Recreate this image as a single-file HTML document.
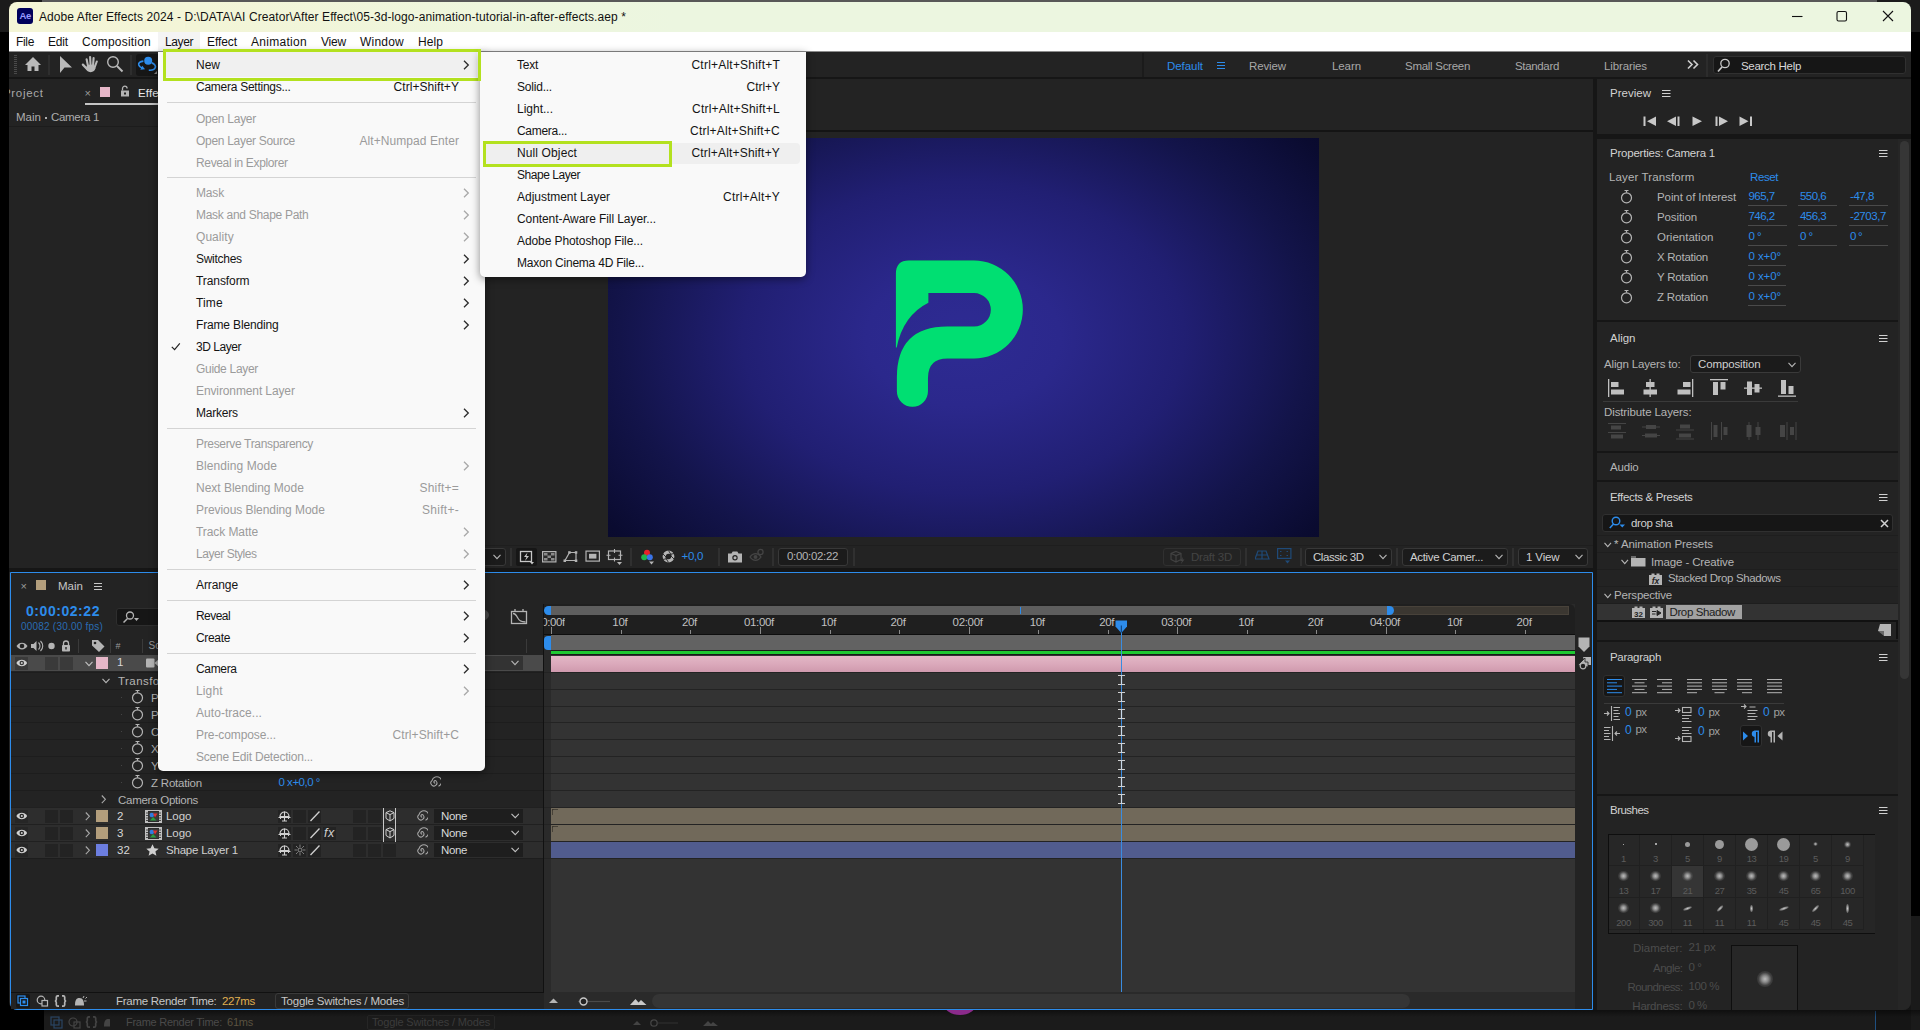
<!DOCTYPE html><html><head><meta charset="utf-8"><title>After Effects</title><style>

html,body{margin:0;padding:0;background:#000;}
body{width:1920px;height:1030px;position:relative;overflow:hidden;font-family:"Liberation Sans",sans-serif;}
body>div,body>span,body>svg{position:absolute;}
.t{white-space:pre;display:block;}
div{box-sizing:border-box;}

#t1{letter-spacing:-0.271px}
#t2{letter-spacing:-0.227px}
#t3{letter-spacing:-0.160px}
#t4{letter-spacing:-0.273px}
#t5{letter-spacing:0.082px}
#t6{letter-spacing:-0.336px}
#t7{letter-spacing:-0.172px}
#t8{letter-spacing:0.209px}
#t9{letter-spacing:-0.406px}
#t10{letter-spacing:-0.078px}
#t11{letter-spacing:0.292px}
#t12{letter-spacing:-0.199px}
#t13{letter-spacing:0.219px}
#t14{letter-spacing:0.078px}
#t15{letter-spacing:-0.062px}
#t16{letter-spacing:-0.120px}
#t17{letter-spacing:-0.084px}
#t18{letter-spacing:-0.283px}
#t19{letter-spacing:-0.336px}
#t20{letter-spacing:-0.123px}
#t21{letter-spacing:-0.300px}
#t22{letter-spacing:0.672px}
#t24{letter-spacing:0.119px}
#t25{letter-spacing:0.016px}
#t26{letter-spacing:-0.312px}
#t27{letter-spacing:-0.301px}
#t28{letter-spacing:-0.336px}
#t29{letter-spacing:-0.229px}
#t30{letter-spacing:-0.447px}
#t31{letter-spacing:-0.331px}
#t32{letter-spacing:-0.135px}
#t34{letter-spacing:0.016px}
#t35{letter-spacing:0.550px}
#t36{letter-spacing:0.212px}
#t40{letter-spacing:0.446px}
#t46{letter-spacing:-0.206px}
#t47{letter-spacing:-0.483px}
#t48{letter-spacing:-0.267px}
#t50{letter-spacing:-0.023px}
#t51{letter-spacing:-0.375px}
#t53{letter-spacing:-0.023px}
#t54{letter-spacing:0.633px}
#t55{letter-spacing:-0.375px}
#t57{letter-spacing:-0.216px}
#t58{letter-spacing:-0.375px}
#t59{letter-spacing:-0.416px}
#t60{letter-spacing:-0.333px}
#t61{letter-spacing:-0.333px}
#t62{letter-spacing:-0.331px}
#t63{letter-spacing:-0.333px}
#t64{letter-spacing:-0.333px}
#t65{letter-spacing:-0.331px}
#t66{letter-spacing:-0.333px}
#t67{letter-spacing:-0.333px}
#t68{letter-spacing:-0.331px}
#t69{letter-spacing:-0.333px}
#t70{letter-spacing:-0.333px}
#t71{letter-spacing:-0.331px}
#t72{letter-spacing:-0.333px}
#t73{letter-spacing:-0.333px}
#t74{letter-spacing:-0.275px}
#t75{letter-spacing:-0.306px}
#t76{letter-spacing:-0.183px}
#t77{letter-spacing:0.013px}
#t78{letter-spacing:-0.215px}
#t79{letter-spacing:0.118px}
#t80{letter-spacing:-0.409px}
#t81{letter-spacing:-0.091px}
#t82{letter-spacing:-0.115px}
#t83{letter-spacing:0.021px}
#t84{letter-spacing:-0.270px}
#t85{letter-spacing:-0.250px}
#t86{letter-spacing:-0.206px}
#t87{letter-spacing:-0.556px}
#t88{letter-spacing:-0.556px}
#t89{letter-spacing:-0.444px}
#t90{letter-spacing:-0.556px}
#t91{letter-spacing:-0.556px}
#t92{letter-spacing:-0.431px}
#t93{letter-spacing:-0.568px}
#t94{letter-spacing:-0.568px}
#t95{letter-spacing:-0.734px}
#t96{letter-spacing:-0.094px}
#t97{letter-spacing:-0.094px}
#t98{letter-spacing:-0.094px}
#t99{letter-spacing:-0.016px}
#t100{letter-spacing:-0.173px}
#t101{letter-spacing:-0.129px}
#t102{letter-spacing:-0.110px}
#t103{letter-spacing:-0.184px}
#t104{letter-spacing:-0.324px}
#t105{letter-spacing:-0.408px}
#t106{letter-spacing:-0.072px}
#t107{letter-spacing:-0.126px}
#t108{letter-spacing:-0.384px}
#t109{letter-spacing:-0.190px}
#t110{letter-spacing:-0.381px}
#t111{letter-spacing:-0.302px}
#t113{letter-spacing:-0.578px}
#t115{letter-spacing:-0.578px}
#t117{letter-spacing:-0.578px}
#t119{letter-spacing:-0.578px}
#t121{letter-spacing:-0.578px}
#t122{letter-spacing:-0.527px}
#t123{letter-spacing:-0.297px}
#t124{letter-spacing:-0.297px}
#t125{letter-spacing:-0.297px}
#t126{letter-spacing:-0.297px}
#t127{letter-spacing:-0.539px}
#t128{letter-spacing:-0.539px}
#t129{letter-spacing:-0.297px}
#t130{letter-spacing:-0.297px}
#t131{letter-spacing:-0.539px}
#t132{letter-spacing:-0.539px}
#t133{letter-spacing:-0.539px}
#t134{letter-spacing:-0.539px}
#t135{letter-spacing:-0.539px}
#t136{letter-spacing:-0.539px}
#t137{letter-spacing:-0.539px}
#t138{letter-spacing:-0.453px}
#t139{letter-spacing:-0.453px}
#t140{letter-spacing:-0.453px}
#t141{letter-spacing:-0.188px}
#t142{letter-spacing:-0.188px}
#t143{letter-spacing:-0.188px}
#t144{letter-spacing:-0.539px}
#t145{letter-spacing:-0.539px}
#t146{letter-spacing:-0.539px}
#t147{letter-spacing:-0.040px}
#t148{letter-spacing:-0.228px}
#t149{letter-spacing:-0.518px}
#t150{letter-spacing:-0.401px}
#t151{letter-spacing:-0.637px}
#t152{letter-spacing:-0.422px}
#t153{letter-spacing:-0.005px}
#t154{letter-spacing:-0.260px}
#t155{letter-spacing:0.066px}
#t156{letter-spacing:-0.272px}
#t157{letter-spacing:-0.298px}
#t158{letter-spacing:0.069px}
#t159{letter-spacing:-0.353px}
#t160{letter-spacing:-0.168px}
#t161{letter-spacing:-0.294px}
#t162{letter-spacing:0.049px}
#t163{letter-spacing:-0.279px}
#t164{letter-spacing:-0.082px}
#t165{letter-spacing:0.141px}
#t166{letter-spacing:-0.158px}
#t167{letter-spacing:-0.463px}
#t168{letter-spacing:-0.307px}
#t169{letter-spacing:-0.113px}
#t170{letter-spacing:-0.221px}
#t171{letter-spacing:-0.336px}
#t172{letter-spacing:0.072px}
#t173{letter-spacing:-0.015px}
#t174{letter-spacing:0.210px}
#t175{letter-spacing:-0.058px}
#t176{letter-spacing:0.283px}
#t177{letter-spacing:-0.082px}
#t178{letter-spacing:-0.453px}
#t179{letter-spacing:-0.100px}
#t180{letter-spacing:-0.560px}
#t181{letter-spacing:-0.339px}
#t182{letter-spacing:-0.331px}
#t183{letter-spacing:0.134px}
#t184{letter-spacing:0.048px}
#t185{letter-spacing:-0.098px}
#t186{letter-spacing:0.095px}
#t187{letter-spacing:-0.221px}
#t188{letter-spacing:-0.254px}
#t189{letter-spacing:0.217px}
#t190{letter-spacing:-0.211px}
#t191{letter-spacing:-0.031px}
#t192{letter-spacing:-0.004px}
#t193{letter-spacing:0.227px}
#t194{letter-spacing:-0.299px}
#t195{letter-spacing:0.227px}
#t196{letter-spacing:0.119px}
#t197{letter-spacing:0.174px}
#t198{letter-spacing:-0.460px}
#t199{letter-spacing:-0.024px}
#t200{letter-spacing:0.231px}
#t201{letter-spacing:-0.081px}
#t202{letter-spacing:-0.091px}
#t203{letter-spacing:-0.219px}
</style></head><body>
<div style="left:0px;top:0px;width:1920px;height:32px;background:#1b1b1b;"></div>
<div style="left:42px;top:0px;width:1835px;height:2px;background:#585858;"></div>
<div style="left:44px;top:1000px;width:1832px;height:30px;background:#1b1b1b;"></div>
<div style="left:1875px;top:1011px;width:1px;height:19px;background:#1f4f80;"></div>
<div style="left:1876px;top:1000px;width:44px;height:30px;background:#151515;"></div>
<div style="left:1911px;top:916px;width:9px;height:114px;background:#1a1a1a;"></div>
<span id="t1" class="t" style="left:126px;top:1014px;font-size:11px;line-height:16px;color:#4a4a4a;">Frame Render Time:</span>
<span id="t2" class="t" style="left:227px;top:1014px;font-size:11px;line-height:16px;color:#5a5240;">61ms</span>
<span id="t3" class="t" style="left:372px;top:1014px;font-size:11px;line-height:16px;color:#3c3c3c;">Toggle Switches / Modes</span>
<div style="left:367px;top:1015px;width:128px;height:15px;background:transparent;border:1px solid #262626;border-radius:2px;"></div>
<svg style="left:50px;top:1016px;" width="60" height="13" viewBox="0 0 60 13"><g fill="none" stroke="#2a4563" stroke-width="1.200"><rect x="1" y="1" width="8" height="8"/><rect x="4" y="4" width="8" height="8"/></g><g fill="none" stroke="#444" stroke-width="1.200"><circle cx="23" cy="6" r="4"/><rect x="24" y="6" width="6" height="6"/></g><path d="M42 0.800h-1.200q-1.500 0-1.500 1.500v2.200q0 1.500-1.500 1.500 1.500 0 1.500 1.500v2.200q0 1.500 1.500 1.500H42M45 0.800h1.200q1.500 0 1.500 1.500v2.200q0 1.500 1.500 1.500-1.500 0-1.500 1.500v2.200q0 1.500-1.500 1.500H45" fill="none" stroke="#444" stroke-width="1.700" transform="translate(-2 0)"/><path d="M55 10.500c0-5 1-7.500 4.500-7.500s4.500 3.500 4.500 7.500z" fill="#444" transform="translate(-1 0)"/></svg>
<div style="left:44px;top:1010px;width:1876px;height:7px;background:linear-gradient(180deg,rgba(0,0,0,0.450),rgba(0,0,0,0));"></div>
<svg style="left:633px;top:1017px;" width="100" height="12" viewBox="0 0 100 12"><path d="M0 8l4-4 4 4z" fill="#444"/><circle cx="21" cy="6" r="3.2" fill="none" stroke="#444" stroke-width="1.3"/><path d="M25 6h20" stroke="#333"/><path d="M70 9l5-5 3 3 2-2 5 4z" fill="#444"/></svg>
<svg style="left:930px;top:1010px;" width="60" height="6" viewBox="0 0 60 6"><ellipse cx="30" cy="-6" rx="16" ry="11" fill="#8a2a8a"/></svg>
<div style="left:9px;top:2px;width:1902px;height:1008px;background:#232323;border-radius:8px;"></div>
<div style="left:9px;top:2px;width:1902px;height:30px;background:linear-gradient(90deg,#f4f5d6 0%,#f3f5d7 10%,#eef6dd 25%,#ecf6e0 35%,#ecf6e0 100%);border-radius:8px 8px 0 0;"></div>
<div style="left:17px;top:8px;width:16px;height:16px;background:#00005b;border-radius:3px;"></div>
<span id="t4" class="t" style="left:19.5px;top:9px;font-size:9.5px;line-height:13px;color:#9999ff;font-weight:bold;letter-spacing:-0.3px;">Ae</span>
<span id="t5" class="t" style="left:39px;top:9px;font-size:12px;line-height:16px;color:#111;">Adobe After Effects 2024 - D:\DATA\AI Creator\After Effect\05-3d-logo-animation-tutorial-in-after-effects.aep *</span>
<svg style="left:1785px;top:5px;" width="120" height="24" viewBox="0 0 120 24"><g stroke="#111" stroke-width="1.1" fill="none"><path d="M7 11.5h10.5"/><rect x="52" y="6.5" width="9.5" height="9.5" rx="1.5"/><path d="M98 6l10 10M108 6l-10 10"/></g></svg>
<div style="left:9px;top:32px;width:1902px;height:20px;background:#ffffff;"></div>
<div style="left:158px;top:32px;width:42px;height:20px;background:#f4f4f4;"></div>
<span id="t6" class="t" style="left:16px;top:34px;font-size:12px;line-height:16px;color:#111;">File</span>
<span id="t7" class="t" style="left:48px;top:34px;font-size:12px;line-height:16px;color:#111;">Edit</span>
<span id="t8" class="t" style="left:82px;top:34px;font-size:12px;line-height:16px;color:#111;">Composition</span>
<span id="t9" class="t" style="left:165px;top:34px;font-size:12px;line-height:16px;color:#111;">Layer</span>
<span id="t10" class="t" style="left:207px;top:34px;font-size:12px;line-height:16px;color:#111;">Effect</span>
<span id="t11" class="t" style="left:251px;top:34px;font-size:12px;line-height:16px;color:#111;">Animation</span>
<span id="t12" class="t" style="left:321px;top:34px;font-size:12px;line-height:16px;color:#111;">View</span>
<span id="t13" class="t" style="left:360px;top:34px;font-size:12px;line-height:16px;color:#111;">Window</span>
<span id="t14" class="t" style="left:418px;top:34px;font-size:12px;line-height:16px;color:#111;">Help</span>
<div style="left:9px;top:51px;width:1902px;height:26px;background:#232323;"></div>
<div style="left:9px;top:51px;width:1902px;height:1px;background:#8c8c8c;"></div>
<div style="left:9px;top:77px;width:1902px;height:2px;background:#161616;"></div>
<svg style="left:14px;top:55px;" width="4" height="20" viewBox="0 0 4 20"><rect x="0" y="0" width="3" height="1" fill="#4a4a4a"/><rect x="0" y="2" width="3" height="1" fill="#4a4a4a"/><rect x="0" y="4" width="3" height="1" fill="#4a4a4a"/><rect x="0" y="6" width="3" height="1" fill="#4a4a4a"/><rect x="0" y="8" width="3" height="1" fill="#4a4a4a"/><rect x="0" y="10" width="3" height="1" fill="#4a4a4a"/><rect x="0" y="12" width="3" height="1" fill="#4a4a4a"/><rect x="0" y="14" width="3" height="1" fill="#4a4a4a"/><rect x="0" y="16" width="3" height="1" fill="#4a4a4a"/><rect x="0" y="18" width="3" height="1" fill="#4a4a4a"/></svg>
<svg style="left:24px;top:56px;" width="18" height="16" viewBox="0 0 18 16"><path d="M9 1L1 9h2.5v6h4v-4.5h3V15h4V9H17z" fill="#b9b9b9"/></svg>
<div style="left:48px;top:55px;width:2px;height:20px;background:#2e2e2e;"></div>
<svg style="left:59px;top:55px;" width="14" height="19" viewBox="0 0 14 19"><path d="M1 1v17l4.5-5.5H13z" fill="#b9b9b9"/></svg>
<svg style="left:81px;top:55px;" width="18" height="18" viewBox="0 0 18 18"><g stroke="#b9b9b9" stroke-width="2.100" stroke-linecap="round" fill="none"><path d="M7.300 12.400L5.600 4.200M9.700 12.400L9.100 2M11.900 12.400L12.600 3.100M13.400 13L15.800 6.500"/><path d="M5.800 13.800L1.900 9.600" stroke-width="2.300"/></g><ellipse cx="9.600" cy="13.300" rx="4.700" ry="3.900" fill="#b9b9b9"/></svg>
<svg style="left:106px;top:55px;" width="18" height="18" viewBox="0 0 18 18"><circle cx="7" cy="7" r="5.3" fill="none" stroke="#b9b9b9" stroke-width="1.4"/><path d="M11 11l5.500 5.500" stroke="#b9b9b9" stroke-width="2"/></svg>
<div style="left:130px;top:55px;width:2px;height:20px;background:#2e2e2e;"></div>
<div style="left:136px;top:54px;width:26px;height:22px;background:#161616;border-radius:3px;"></div>
<svg style="left:137px;top:55px;" width="24" height="20" viewBox="0 0 24 20"><circle cx="11.200" cy="5.800" r="4" fill="#2d8ceb"/><path d="M6.400 6.100C3 6.500 1.200 8 1.800 10C2.300 11.500 3.500 12.500 5 13" fill="none" stroke="#2d8ceb" stroke-width="1.700"/><path d="M3.300 14.700l4.700-0.400-2.700-3.600z" fill="#2d8ceb"/><path d="M14.800 7.900C17.500 9 19 10.800 18.300 12.500C17.600 14.300 15 15.400 11.800 15.200" fill="none" stroke="#2d8ceb" stroke-width="1.700"/><path d="M20 19v-3l-3 3z" fill="#888"/></svg>
<div style="left:1142px;top:53px;width:2px;height:24px;background:#1b1b1b;"></div>
<span id="t15" class="t" style="left:1167px;top:58px;font-size:11.5px;line-height:16px;color:#2d8ceb;">Default</span>
<svg style="left:1217px;top:61px;" width="9" height="9" viewBox="0 0 9 9"><path d="M0 1.500h8M0 4.500h8M0 7.500h8" stroke="#2d8ceb" stroke-width="1.200"/></svg>
<span id="t16" class="t" style="left:1249px;top:58px;font-size:11.5px;line-height:16px;color:#a8a8a8;">Review</span>
<span id="t17" class="t" style="left:1332px;top:58px;font-size:11.5px;line-height:16px;color:#a8a8a8;">Learn</span>
<span id="t18" class="t" style="left:1405px;top:58px;font-size:11.5px;line-height:16px;color:#a8a8a8;">Small Screen</span>
<span id="t19" class="t" style="left:1515px;top:58px;font-size:11.5px;line-height:16px;color:#a8a8a8;">Standard</span>
<span id="t20" class="t" style="left:1604px;top:58px;font-size:11.5px;line-height:16px;color:#a8a8a8;">Libraries</span>
<svg style="left:1687px;top:59px;" width="12" height="11" viewBox="0 0 12 11"><path d="M1 1.500l4 4-4 4M6.500 1.500l4 4-4 4" fill="none" stroke="#d0d0d0" stroke-width="1.600"/></svg>
<div style="left:1706px;top:54px;width:2px;height:23px;background:#2c2c2c;"></div>
<div style="left:1713px;top:56px;width:193px;height:18px;background:#161616;border:1px solid #303030;border-radius:3px;"></div>
<svg style="left:1716px;top:58px;" width="16" height="15" viewBox="0 0 16 15"><circle cx="9" cy="5.500" r="4.200" fill="none" stroke="#c8c8c8" stroke-width="1.300"/><path d="M6 9L2 13.500" stroke="#c8c8c8" stroke-width="1.700"/></svg>
<span id="t21" class="t" style="left:1741px;top:58px;font-size:11.5px;line-height:16px;color:#d8d8d8;">Search Help</span>
<span id="t22" class="t" style="left:3px;top:85px;font-size:11.5px;line-height:16px;color:#a8a8a8;clip-path:inset(0 0 0 6px);">Project</span>
<span id="t23" class="t" style="left:84.5px;top:85px;font-size:11px;line-height:16px;color:#9a9a9a;">×</span>
<div style="left:100px;top:87px;width:10px;height:10px;background:#e6b7c8;"></div>
<svg style="left:120px;top:85px;" width="10" height="12" viewBox="0 0 10 12"><path d="M2.500 5.500V3.500a2.300 2.300 0 0 1 4.600 0" fill="none" stroke="#b4b4b4" stroke-width="1.300"/><rect x="1" y="5.500" width="8" height="6" fill="#b4b4b4"/><rect x="4" y="7.500" width="2" height="2" fill="#232323"/></svg>
<span id="t24" class="t" style="left:138px;top:85px;font-size:11.5px;line-height:16px;color:#e8e8e8;">Effect Controls</span>
<div style="left:85px;top:103px;width:300px;height:2px;background:#c4c4c4;"></div>
<span id="t25" class="t" style="left:16px;top:109px;font-size:11.5px;line-height:16px;color:#aeaeae;">Main</span>
<div style="left:45px;top:117px;width:2px;height:2px;background:#aeaeae;"></div>
<span id="t26" class="t" style="left:51px;top:109px;font-size:11.5px;line-height:16px;color:#aeaeae;">Camera 1</span>
<div style="left:9px;top:126px;width:428px;height:1px;background:#1c1c1c;"></div>
<div style="left:437px;top:79px;width:3px;height:493px;background:#161616;"></div>
<div style="left:440px;top:130px;width:1153px;height:2px;background:#141414;"></div>
<div style="left:1593px;top:79px;width:4px;height:931px;background:#161616;"></div>
<div style="left:608px;top:138px;width:711px;height:399px;background:radial-gradient(ellipse 62% 78% at 50% 50%,#2e2b93 0%,#2b288c 22%,#211f73 50%,#13144a 78%,#0a0b30 100%,#070824 115%);"></div>
<svg style="left:608px;top:138px;" width="711" height="399" viewBox="608 138 711 399"><defs><filter id="ds" x="-20%" y="-20%" width="140%" height="140%"><feGaussianBlur in="SourceAlpha" stdDeviation="4"/><feOffset dx="0" dy="1"/><feComponentTransfer><feFuncA type="linear" slope="0.600"/></feComponentTransfer><feMerge><feMergeNode/><feMergeNode in="SourceGraphic"/></feMerge></filter></defs><g transform="translate(860 230) scale(0.19417)" filter="url(#ds)"><path d="M185 225Q185 157 252 157L586 157A252.500 252.500 0 0 1 586 662L450 662Q350 662 350 762L350 830A80 80 0 0 1 190 830L190 760Q190 497 450 497L588 497A86 86 0 0 0 588 325L352 325L352 375Q222 440 189 605L185 605Z" fill="#05df72"/></g></svg>
<div style="left:485px;top:545px;width:1108px;height:1px;background:#1e1e1e;"></div>
<div style="left:440px;top:548px;width:66px;height:18px;background:#1b1b1b;border:1px solid #383838;border-radius:3px;"></div>
<svg style="left:493px;top:554px;" width="8" height="6" viewBox="0 0 8 6"><path d="M0.500 0.800l3.5 3.8 3.5-3.800" fill="none" stroke="#b4b4b4" stroke-width="1.150"/></svg>
<div style="left:510px;top:548px;width:2px;height:18px;background:#303030;"></div>
<div style="left:516px;top:548px;width:21px;height:18px;background:#161616;border-radius:2px;"></div>
<svg style="left:519px;top:549px;" width="16" height="16" viewBox="0 0 16 16"><rect x="1.500" y="2.500" width="11" height="10" fill="none" stroke="#c8c8c8" stroke-width="1.300"/><path d="M8.500 3.500L5 8h2.500L6 12l4-5H7.500z" fill="#c8c8c8"/><path d="M11 13h4l-2 2.500z" fill="#c8c8c8"/></svg>
<svg style="left:542px;top:551px;" width="15" height="12" viewBox="0 0 15 12"><rect x="0.600" y="0.600" width="13.300" height="10.300" fill="#2a2a2a" stroke="#b4b4b4" stroke-width="1.200"/><path d="M2 2h3.500v2.500H2zM9 2h3.500v2.500H9zM5.500 4.500H9V7H5.500zM2 7h3.500v2.500H2zM9 7h3.500v2.500H9z" fill="#8a8a8a"/></svg>
<svg style="left:563px;top:550px;" width="16" height="13" viewBox="0 0 16 13"><path d="M6.500 2.500L13 2.500 13 10.500 2 10.500z" fill="none" stroke="#b4b4b4" stroke-width="1.200"/><rect x="0.500" y="9.500" width="2.500" height="2.500" fill="#b4b4b4"/><rect x="11.800" y="1.200" width="2.500" height="2.500" fill="#b4b4b4"/><rect x="5.200" y="1.200" width="2.500" height="2.500" fill="#b4b4b4"/><rect x="11.800" y="9.500" width="2.500" height="2.500" fill="#b4b4b4"/></svg>
<svg style="left:585px;top:550px;" width="16" height="13" viewBox="0 0 16 13"><rect x="1" y="1.100" width="13.400" height="10" fill="none" stroke="#b4b4b4" stroke-width="1.200"/><rect x="4" y="3.800" width="7.400" height="4.800" fill="#b4b4b4"/></svg>
<svg style="left:606px;top:548px;" width="18" height="18" viewBox="0 0 18 18"><rect x="2.500" y="3" width="12" height="8.500" fill="none" stroke="#b4b4b4" stroke-width="1.200"/><path d="M8.500 1v4M8.500 9.500v4M0.500 7.200h4M12.500 7.200h4" stroke="#b4b4b4" stroke-width="1.100"/><path d="M11 14h5l-2.500 3z" fill="#b4b4b4"/></svg>
<div style="left:630px;top:548px;width:2px;height:18px;background:#303030;"></div>
<svg style="left:640px;top:549px;" width="16" height="17" viewBox="0 0 16 17"><circle cx="7" cy="3.800" r="3" fill="#e8202a"/><circle cx="4.200" cy="8.300" r="3" fill="#22b14c"/><circle cx="9.800" cy="8.300" r="3" fill="#3a74e8"/><path d="M9 12.500h5l-2.500 3z" fill="#b4b4b4"/></svg>
<svg style="left:662px;top:550px;" width="14" height="14" viewBox="0 0 14 14"><circle cx="6.500" cy="6.500" r="4.300" fill="none" stroke="#b4b4b4" stroke-width="3.200"/><path d="M6.500 0.500l3 5M12.500 3.500l-5.500 1M12.500 9.500l-4-4M6.500 12.500l-3-5M0.500 9.500l5.500-1M0.500 3.500l4 4" stroke="#232323" stroke-width="0.900"/></svg>
<span id="t27" class="t" style="left:681.5px;top:548px;font-size:11.5px;line-height:16px;color:#2d8ceb;">+0,0</span>
<div style="left:718px;top:548px;width:2px;height:18px;background:#303030;"></div>
<svg style="left:727px;top:550px;" width="16" height="13" viewBox="0 0 16 13"><path d="M1 3.500h3.500l1.200-2h4.600l1.200 2H15v9H1z" fill="#b4b4b4"/><circle cx="8" cy="7.800" r="2.700" fill="#232323"/><circle cx="8" cy="7.800" r="1.500" fill="#b4b4b4"/></svg>
<svg style="left:749px;top:548px;" width="16" height="15" viewBox="0 0 16 15"><path d="M1 9c3-4.500 8-4.500 11 0-3 4.500-8 4.500-11 0z" fill="none" stroke="#444" stroke-width="1.300"/><circle cx="6.500" cy="9" r="2" fill="#444"/><circle cx="11.500" cy="4" r="2.600" fill="none" stroke="#444" stroke-width="1.300"/></svg>
<div style="left:772px;top:548px;width:2px;height:18px;background:#303030;"></div>
<div style="left:778px;top:548px;width:70px;height:18px;background:#1b1b1b;border:1px solid #383838;border-radius:3px;"></div>
<span id="t28" class="t" style="left:787px;top:548px;font-size:11.5px;line-height:16px;color:#b4b4b4;">0:00:02:22</span>
<div style="left:853px;top:548px;width:2px;height:18px;background:#303030;"></div>
<div style="left:1163px;top:548px;width:78px;height:18px;background:transparent;border:1px solid #303030;border-radius:3px;"></div>
<svg style="left:1170px;top:550px;" width="18" height="15" viewBox="0 0 18 15"><path d="M6 1.500l5 2v6l-5 2.500-5-2.500v-6z M1 3.500l5 2 5-2M6 5.500v6.500" fill="none" stroke="#424242" stroke-width="1.200"/><path d="M13 7l-3 4h2l-1.500 3.500 4-5h-2z" fill="#424242"/></svg>
<span id="t29" class="t" style="left:1191px;top:549px;font-size:11.5px;line-height:16px;color:#434343;">Draft 3D</span>
<div style="left:1245px;top:548px;width:2px;height:18px;background:#303030;"></div>
<svg style="left:1255px;top:550px;" width="15" height="11" viewBox="0 0 15 11"><path d="M3 1h8l3 8H0z M7 1v8M1.500 5h11" fill="none" stroke="#1f4a78" stroke-width="1.200"/></svg>
<svg style="left:1277px;top:548px;" width="15" height="17" viewBox="0 0 15 17"><rect x="0.600" y="0.600" width="13.300" height="9.800" fill="none" stroke="#1f4a78" stroke-width="1.200"/><path d="M3 3.500h1.500M9.500 3.500H11M3 7.500h1.500M9.500 7.500H11" stroke="#1f4a78"/><path d="M8 12.500h5l-2.500 3z" fill="#1f4a78"/></svg>
<div style="left:1300px;top:548px;width:2px;height:18px;background:#303030;"></div>
<div style="left:1305px;top:548px;width:87px;height:18px;background:#1b1b1b;border:1px solid #383838;border-radius:3px;"></div>
<span id="t30" class="t" style="left:1313px;top:549px;font-size:11.5px;line-height:16px;color:#d0d0d0;">Classic 3D</span>
<svg style="left:1379px;top:554px;" width="8" height="6" viewBox="0 0 8 6"><path d="M0.500 0.800l3.5 3.8 3.5-3.800" fill="none" stroke="#b4b4b4" stroke-width="1.150"/></svg>
<div style="left:1396px;top:548px;width:2px;height:18px;background:#303030;"></div>
<div style="left:1402px;top:548px;width:106px;height:18px;background:#1b1b1b;border:1px solid #383838;border-radius:3px;"></div>
<span id="t31" class="t" style="left:1410px;top:549px;font-size:11.5px;line-height:16px;color:#d0d0d0;">Active Camer...</span>
<svg style="left:1494.5px;top:554px;" width="8" height="6" viewBox="0 0 8 6"><path d="M0.500 0.800l3.5 3.8 3.5-3.800" fill="none" stroke="#b4b4b4" stroke-width="1.150"/></svg>
<div style="left:1512px;top:548px;width:2px;height:18px;background:#303030;"></div>
<div style="left:1518px;top:548px;width:70px;height:18px;background:#1b1b1b;border:1px solid #383838;border-radius:3px;"></div>
<span id="t32" class="t" style="left:1526px;top:549px;font-size:11.5px;line-height:16px;color:#d0d0d0;">1 View</span>
<svg style="left:1575px;top:554px;" width="8" height="6" viewBox="0 0 8 6"><path d="M0.500 0.800l3.5 3.8 3.5-3.800" fill="none" stroke="#b4b4b4" stroke-width="1.150"/></svg>
<div style="left:9px;top:568px;width:1584px;height:4px;background:#161616;"></div>
<div style="left:10px;top:572px;width:1583px;height:438px;background:#232323;border:1px solid #2d8ceb;border-radius:0 0 0 7px;"></div>
<span id="t33" class="t" style="left:20.5px;top:578px;font-size:11px;line-height:16px;color:#9a9a9a;">×</span>
<div style="left:36px;top:580px;width:10px;height:10px;background:#b39e7c;"></div>
<span id="t34" class="t" style="left:58px;top:578px;font-size:11.5px;line-height:16px;color:#c6c6c6;">Main</span>
<svg style="left:94px;top:582px;" width="9" height="9" viewBox="0 0 9 9"><path d="M0 1.500h8M0 4.500h8M0 7.500h8" stroke="#c6c6c6" stroke-width="1.200"/></svg>
<span id="t35" class="t" style="left:26px;top:602px;font-size:14px;line-height:18px;color:#2d8ceb;font-weight:bold;">0:00:02:22</span>
<span id="t36" class="t" style="left:21px;top:619px;font-size:10px;line-height:15px;color:#2a6cb3;">00082 (30.00 fps)</span>
<div style="left:116px;top:608px;width:345px;height:18px;background:#161616;border:1px solid #2e2e2e;border-radius:3px;"></div>
<svg style="left:122px;top:611px;" width="20" height="12" viewBox="0 0 20 12"><circle cx="8" cy="4.500" r="3.500" fill="none" stroke="#b4b4b4" stroke-width="1.300"/><path d="M5.500 7.500L1.500 11.500" stroke="#b4b4b4" stroke-width="1.500"/><path d="M12 7h5l-2.500 3z" fill="#b4b4b4"/></svg>
<svg style="left:472px;top:608px;" width="20" height="18" viewBox="0 0 20 18"><ellipse cx="9" cy="7" rx="8" ry="6" fill="#4a4a4a"/><path d="M9 13l-1 4" stroke="#4a4a4a" stroke-width="2"/></svg>
<svg style="left:510px;top:608px;" width="19" height="18" viewBox="0 0 19 18"><rect x="1.500" y="3.500" width="15" height="12" fill="none" stroke="#b4b4b4" stroke-width="1.300"/><path d="M5 1v3M13 1v3M3 5.500c2 0 3 1 4.500 4s3 4.500 8 4.500" fill="none" stroke="#b4b4b4" stroke-width="1.300"/></svg>
<div style="left:11px;top:636px;width:533px;height:19px;background:#232323;"></div>
<svg style="left:16px;top:640px;" width="60" height="12" viewBox="0 0 60 12"><path d="M0.500 6C3 1.500 9 1.500 11.500 6 9 10.500 3 10.500 0.500 6z" fill="#b4b4b4"/><circle cx="6" cy="6" r="2.300" fill="#232323"/><path d="M15 4h2.500l3-3v10l-3-3H15z" fill="#b4b4b4"/><path d="M22.500 2.500c2 2 2 5 0 7M24.500 1c3 3 3 7 0 10" fill="none" stroke="#b4b4b4" stroke-width="1.100"/><circle cx="35.500" cy="6" r="3.200" fill="#b4b4b4"/><path d="M47.500 5V3.500a2.500 2.500 0 0 1 5 0V5" fill="none" stroke="#b4b4b4" stroke-width="1.300"/><rect x="46" y="5" width="8" height="6.500" rx="0.800" fill="#b4b4b4"/><rect x="49.300" y="7" width="1.400" height="2.500" fill="#232323"/></svg>
<div style="left:78px;top:639px;width:1px;height:14px;background:#3a3a3a;"></div>
<svg style="left:91px;top:639px;" width="14" height="14" viewBox="0 0 14 14"><path d="M1 1h6l6.500 6.500-5.500 5.500L1 6.500z" fill="#b4b4b4"/><circle cx="4" cy="4" r="1.300" fill="#232323"/></svg>
<div style="left:110px;top:639px;width:1px;height:14px;background:#3a3a3a;"></div>
<span id="t37" class="t" style="left:115.5px;top:639px;font-size:9px;line-height:14px;color:#9a9a9a;">#</span>
<div style="left:142px;top:639px;width:1px;height:14px;background:#3a3a3a;"></div>
<span id="t38" class="t" style="left:148.5px;top:638px;font-size:10px;line-height:15px;color:#9a9a9a;">Source Name</span>
<div style="left:526px;top:639px;width:1px;height:14px;background:#3a3a3a;"></div>
<div style="left:11px;top:655px;width:533px;height:16px;background:#4a4a4a;"></div>
<div style="left:11px;top:808px;width:533px;height:16px;background:#2d2d2d;"></div>
<div style="left:11px;top:825px;width:533px;height:16px;background:#2d2d2d;"></div>
<div style="left:11px;top:842px;width:533px;height:16px;background:#2d2d2d;"></div>
<div style="left:11px;top:672px;width:533px;height:1px;background:#1d1d1d;"></div>
<div style="left:11px;top:689px;width:533px;height:1px;background:#1d1d1d;"></div>
<div style="left:11px;top:706px;width:533px;height:1px;background:#1d1d1d;"></div>
<div style="left:11px;top:722px;width:533px;height:1px;background:#1d1d1d;"></div>
<div style="left:11px;top:739px;width:533px;height:1px;background:#1d1d1d;"></div>
<div style="left:11px;top:756px;width:533px;height:1px;background:#1d1d1d;"></div>
<div style="left:11px;top:773px;width:533px;height:1px;background:#1d1d1d;"></div>
<div style="left:11px;top:790px;width:533px;height:1px;background:#1d1d1d;"></div>
<div style="left:11px;top:807px;width:533px;height:1px;background:#202020;"></div>
<div style="left:11px;top:824px;width:533px;height:1px;background:#202020;"></div>
<div style="left:11px;top:841px;width:533px;height:1px;background:#202020;"></div>
<div style="left:11px;top:858px;width:533px;height:1px;background:#1d1d1d;"></div>
<div style="left:15px;top:657px;width:13px;height:13px;background:#3a3a3a;"></div>
<svg style="left:16px;top:658px;" width="12" height="10" viewBox="0 0 12 10"><path d="M0.300 5C3 0.600 8.500 0.600 11.200 5 8.500 9.400 3 9.400 0.300 5z" fill="#d0d0d0"/><circle cx="5.800" cy="5" r="2.300" fill="#3a3a3a"/><circle cx="5.800" cy="5" r="1" fill="#d0d0d0"/></svg>
<div style="left:45px;top:657px;width:13px;height:13px;background:#3a3a3a;"></div>
<div style="left:60px;top:657px;width:13px;height:13px;background:#3a3a3a;"></div>
<svg style="left:85px;top:660.5px;" width="8" height="6" viewBox="0 0 8 6"><path d="M0.500 0.800l3.5 3.8 3.5-3.800" fill="none" stroke="#c0c0c0" stroke-width="1.150"/></svg>
<div style="left:96px;top:657px;width:12px;height:12px;background:#e6b7c8;"></div>
<span id="t39" class="t" style="left:117px;top:654px;font-size:11.5px;line-height:16px;color:#d8d8d8;">1</span>
<svg style="left:146px;top:658px;" width="14" height="10" viewBox="0 0 14 10"><rect x="0" y="0.500" width="8.500" height="9" rx="1" fill="#b4b4b4"/><path d="M8.500 5l5-4.500v9z" fill="#b4b4b4"/></svg>
<div style="left:434px;top:656px;width:89px;height:14px;background:#333;"></div>
<svg style="left:510.5px;top:660px;" width="8" height="6" viewBox="0 0 8 6"><path d="M0.500 0.800l3.5 3.8 3.5-3.800" fill="none" stroke="#b4b4b4" stroke-width="1.150"/></svg>
<svg style="left:102px;top:677.5px;" width="8" height="6" viewBox="0 0 8 6"><path d="M0.500 0.800l3.5 3.8 3.5-3.800" fill="none" stroke="#b4b4b4" stroke-width="1.150"/></svg>
<span id="t40" class="t" style="left:118px;top:673px;font-size:11.5px;line-height:16px;color:#b4b4b4;">Transform</span>
<div style="left:121px;top:697px;width:1px;height:1px;background:#444;"></div>
<svg style="left:131px;top:689px;" width="13" height="15" viewBox="0 0 13 15"><circle cx="6.500" cy="8.800" r="5" fill="none" stroke="#b4b4b4" stroke-width="1.200"/><path d="M4.500 1.500h4M6.500 1.500v2.300" stroke="#b4b4b4" stroke-width="1.200" fill="none"/></svg>
<span id="t41" class="t" style="left:151px;top:690px;font-size:11.5px;line-height:16px;color:#b4b4b4;">Point of Interest</span>
<div style="left:121px;top:714px;width:1px;height:1px;background:#444;"></div>
<svg style="left:131px;top:706px;" width="13" height="15" viewBox="0 0 13 15"><circle cx="6.500" cy="8.800" r="5" fill="none" stroke="#b4b4b4" stroke-width="1.200"/><path d="M4.500 1.500h4M6.500 1.500v2.300" stroke="#b4b4b4" stroke-width="1.200" fill="none"/></svg>
<span id="t42" class="t" style="left:151px;top:707px;font-size:11.5px;line-height:16px;color:#b4b4b4;">Position</span>
<div style="left:121px;top:731px;width:1px;height:1px;background:#444;"></div>
<svg style="left:131px;top:723px;" width="13" height="15" viewBox="0 0 13 15"><circle cx="6.500" cy="8.800" r="5" fill="none" stroke="#b4b4b4" stroke-width="1.200"/><path d="M4.500 1.500h4M6.500 1.500v2.300" stroke="#b4b4b4" stroke-width="1.200" fill="none"/></svg>
<span id="t43" class="t" style="left:151px;top:724px;font-size:11.5px;line-height:16px;color:#b4b4b4;">Orientation</span>
<div style="left:121px;top:748px;width:1px;height:1px;background:#444;"></div>
<svg style="left:131px;top:740px;" width="13" height="15" viewBox="0 0 13 15"><circle cx="6.500" cy="8.800" r="5" fill="none" stroke="#b4b4b4" stroke-width="1.200"/><path d="M4.500 1.500h4M6.500 1.500v2.300" stroke="#b4b4b4" stroke-width="1.200" fill="none"/></svg>
<span id="t44" class="t" style="left:151px;top:741px;font-size:11.5px;line-height:16px;color:#b4b4b4;">X Rotation</span>
<div style="left:121px;top:765px;width:1px;height:1px;background:#444;"></div>
<svg style="left:131px;top:757px;" width="13" height="15" viewBox="0 0 13 15"><circle cx="6.500" cy="8.800" r="5" fill="none" stroke="#b4b4b4" stroke-width="1.200"/><path d="M4.500 1.500h4M6.500 1.500v2.300" stroke="#b4b4b4" stroke-width="1.200" fill="none"/></svg>
<span id="t45" class="t" style="left:151px;top:758px;font-size:11.5px;line-height:16px;color:#b4b4b4;">Y Rotation</span>
<div style="left:121px;top:782px;width:1px;height:1px;background:#444;"></div>
<svg style="left:131px;top:774px;" width="13" height="15" viewBox="0 0 13 15"><circle cx="6.500" cy="8.800" r="5" fill="none" stroke="#b4b4b4" stroke-width="1.200"/><path d="M4.500 1.500h4M6.500 1.500v2.300" stroke="#b4b4b4" stroke-width="1.200" fill="none"/></svg>
<span id="t46" class="t" style="left:151px;top:775px;font-size:11.5px;line-height:16px;color:#b4b4b4;">Z Rotation</span>
<span id="t47" class="t" style="left:278.5px;top:774px;font-size:11.5px;line-height:16px;color:#2d8ceb;">0 x+0,0 °</span>
<svg style="left:428.5px;top:776px;" width="12" height="12" viewBox="0 0 12 12"><path d="M6.200 7.200a1.300 1.300 0 1 1 1.100-2 3 3 0 1 1-4.300-0.600 4.900 4.900 0 1 1 6.500 5.600" fill="none" stroke="#a8a8a8" stroke-width="1.050"/></svg>
<svg style="left:101px;top:795px;" width="6" height="9" viewBox="0 0 6 9"><path d="M0.800 0.500l3.600 3.800-3.600 3.800" fill="none" stroke="#a8a8a8" stroke-width="1.100"/></svg>
<span id="t48" class="t" style="left:118px;top:792px;font-size:11.5px;line-height:16px;color:#b4b4b4;">Camera Options</span>
<div style="left:15px;top:810px;width:13px;height:13px;background:#262626;"></div>
<svg style="left:16px;top:811px;" width="12" height="10" viewBox="0 0 12 10"><path d="M0.300 5C3 0.600 8.500 0.600 11.200 5 8.500 9.400 3 9.400 0.300 5z" fill="#d0d0d0"/><circle cx="5.800" cy="5" r="2.300" fill="#262626"/><circle cx="5.800" cy="5" r="1" fill="#d0d0d0"/></svg>
<div style="left:45px;top:810px;width:13px;height:13px;background:#232323;"></div>
<div style="left:60px;top:810px;width:13px;height:13px;background:#232323;"></div>
<svg style="left:85px;top:812px;" width="6" height="9" viewBox="0 0 6 9"><path d="M0.800 0.500l3.600 3.800-3.600 3.800" fill="none" stroke="#a8a8a8" stroke-width="1.100"/></svg>
<div style="left:96px;top:810px;width:12px;height:12px;background:#b39e7c;"></div>
<span id="t49" class="t" style="left:117px;top:808px;font-size:11.5px;line-height:16px;color:#d8d8d8;">2</span>
<svg style="left:145px;top:810px;" width="17" height="13" viewBox="0 0 17 13"><rect x="0.500" y="0.500" width="16" height="12" fill="#2d2d2d" stroke="#c0c0c0"/><path d="M1 1h2v11H1zM14 1h2v11h-2z" fill="#c0c0c0"/><path d="M1 3h2M1 5.500h2M1 8h2M1 10.500h2M14 3h2M14 5.500h2M14 8h2M14 10.500h2" stroke="#2d2d2d" stroke-width="0.800"/><rect x="3.500" y="2" width="10" height="9" fill="#3a3a3a"/><circle cx="6.800" cy="5" r="2.200" fill="#2f7de0"/><path d="M8 3.500h4.500L10 7.500z" fill="#e03030"/><path d="M5 10.500l3-3.500 3.500 3.500z" fill="#28a040"/></svg>
<span id="t50" class="t" style="left:166px;top:808px;font-size:11.5px;line-height:16px;color:#d0d0d0;">Logo</span>
<div style="left:278px;top:810px;width:13px;height:13px;background:#232323;"></div>
<svg style="left:278px;top:810px;" width="13" height="12" viewBox="0 0 13 12"><path d="M2 6.500a4.500 4.500 0 0 1 9 0z" fill="none" stroke="#d0d0d0" stroke-width="1.200"/><path d="M6.500 1.500v9.500M0.500 7.500h12M4 11h5" stroke="#d0d0d0" stroke-width="1.100"/><path d="M2.500 7v2M10.500 7v2" stroke="#d0d0d0" stroke-width="1"/></svg>
<div style="left:293px;top:810px;width:13px;height:13px;background:#232323;"></div>
<div style="left:308px;top:810px;width:13px;height:13px;background:#232323;"></div>
<svg style="left:308.5px;top:810px;" width="12" height="12" viewBox="0 0 12 12"><path d="M1.500 11L10.500 1.500" stroke="#d0d0d0" stroke-width="1.300"/></svg>
<div style="left:353px;top:810px;width:13px;height:13px;background:#232323;"></div>
<div style="left:368px;top:810px;width:13px;height:13px;background:#232323;"></div>
<div style="left:383px;top:808px;width:1px;height:17px;background:#c8c8c8;"></div>
<div style="left:395px;top:808px;width:1px;height:17px;background:#c8c8c8;"></div>
<svg style="left:385px;top:810px;" width="10" height="12" viewBox="0 0 10 12"><path d="M5 0.800l4 1.800v5.800l-4 2.600-4-2.600V2.600z M1 2.600l4 2 4-2M5 4.600v6.400" fill="none" stroke="#d0d0d0" stroke-width="1"/></svg>
<svg style="left:415.5px;top:810px;" width="12" height="12" viewBox="0 0 12 12"><path d="M6.200 7.200a1.300 1.300 0 1 1 1.100-2 3 3 0 1 1-4.300-0.600 4.900 4.900 0 1 1 6.500 5.600" fill="none" stroke="#a8a8a8" stroke-width="1.050"/></svg>
<div style="left:434px;top:809px;width:89px;height:14px;background:#1e1e1e;"></div>
<span id="t51" class="t" style="left:441px;top:808px;font-size:11.5px;line-height:16px;color:#d8d8d8;">None</span>
<svg style="left:510.5px;top:813px;" width="8.5" height="6" viewBox="0 0 8.5 6"><path d="M0.500 0.800l3.75 3.8 3.75-3.800" fill="none" stroke="#c0c0c0" stroke-width="1.150"/></svg>
<div style="left:15px;top:827px;width:13px;height:13px;background:#262626;"></div>
<svg style="left:16px;top:828px;" width="12" height="10" viewBox="0 0 12 10"><path d="M0.300 5C3 0.600 8.500 0.600 11.200 5 8.500 9.400 3 9.400 0.300 5z" fill="#d0d0d0"/><circle cx="5.800" cy="5" r="2.300" fill="#262626"/><circle cx="5.800" cy="5" r="1" fill="#d0d0d0"/></svg>
<div style="left:45px;top:827px;width:13px;height:13px;background:#232323;"></div>
<div style="left:60px;top:827px;width:13px;height:13px;background:#232323;"></div>
<svg style="left:85px;top:829px;" width="6" height="9" viewBox="0 0 6 9"><path d="M0.800 0.500l3.600 3.800-3.600 3.800" fill="none" stroke="#a8a8a8" stroke-width="1.100"/></svg>
<div style="left:96px;top:827px;width:12px;height:12px;background:#b39e7c;"></div>
<span id="t52" class="t" style="left:117px;top:825px;font-size:11.5px;line-height:16px;color:#d8d8d8;">3</span>
<svg style="left:145px;top:827px;" width="17" height="13" viewBox="0 0 17 13"><rect x="0.500" y="0.500" width="16" height="12" fill="#2d2d2d" stroke="#c0c0c0"/><path d="M1 1h2v11H1zM14 1h2v11h-2z" fill="#c0c0c0"/><path d="M1 3h2M1 5.500h2M1 8h2M1 10.500h2M14 3h2M14 5.500h2M14 8h2M14 10.500h2" stroke="#2d2d2d" stroke-width="0.800"/><rect x="3.500" y="2" width="10" height="9" fill="#3a3a3a"/><circle cx="6.800" cy="5" r="2.200" fill="#2f7de0"/><path d="M8 3.500h4.500L10 7.500z" fill="#e03030"/><path d="M5 10.500l3-3.500 3.500 3.500z" fill="#28a040"/></svg>
<span id="t53" class="t" style="left:166px;top:825px;font-size:11.5px;line-height:16px;color:#d0d0d0;">Logo</span>
<div style="left:278px;top:827px;width:13px;height:13px;background:#232323;"></div>
<svg style="left:278px;top:827px;" width="13" height="12" viewBox="0 0 13 12"><path d="M2 6.500a4.500 4.500 0 0 1 9 0z" fill="none" stroke="#d0d0d0" stroke-width="1.200"/><path d="M6.500 1.500v9.500M0.500 7.500h12M4 11h5" stroke="#d0d0d0" stroke-width="1.100"/><path d="M2.500 7v2M10.500 7v2" stroke="#d0d0d0" stroke-width="1"/></svg>
<div style="left:293px;top:827px;width:13px;height:13px;background:#232323;"></div>
<div style="left:308px;top:827px;width:13px;height:13px;background:#232323;"></div>
<svg style="left:308.5px;top:827px;" width="12" height="12" viewBox="0 0 12 12"><path d="M1.500 11L10.500 1.500" stroke="#d0d0d0" stroke-width="1.300"/></svg>
<div style="left:323px;top:827px;width:13px;height:13px;background:#232323;"></div>
<span id="t54" class="t" style="left:324px;top:825px;font-size:12.5px;line-height:16px;color:#d0d0d0;font-style:italic;">fx</span>
<div style="left:353px;top:827px;width:13px;height:13px;background:#232323;"></div>
<div style="left:368px;top:827px;width:13px;height:13px;background:#232323;"></div>
<div style="left:383px;top:825px;width:1px;height:17px;background:#c8c8c8;"></div>
<div style="left:395px;top:825px;width:1px;height:17px;background:#c8c8c8;"></div>
<svg style="left:385px;top:827px;" width="10" height="12" viewBox="0 0 10 12"><path d="M5 0.800l4 1.800v5.800l-4 2.600-4-2.600V2.600z M1 2.600l4 2 4-2M5 4.600v6.400" fill="none" stroke="#d0d0d0" stroke-width="1"/></svg>
<svg style="left:415.5px;top:827px;" width="12" height="12" viewBox="0 0 12 12"><path d="M6.200 7.200a1.300 1.300 0 1 1 1.100-2 3 3 0 1 1-4.300-0.600 4.900 4.900 0 1 1 6.500 5.600" fill="none" stroke="#a8a8a8" stroke-width="1.050"/></svg>
<div style="left:434px;top:826px;width:89px;height:14px;background:#1e1e1e;"></div>
<span id="t55" class="t" style="left:441px;top:825px;font-size:11.5px;line-height:16px;color:#d8d8d8;">None</span>
<svg style="left:510.5px;top:830px;" width="8.5" height="6" viewBox="0 0 8.5 6"><path d="M0.500 0.800l3.75 3.8 3.75-3.800" fill="none" stroke="#c0c0c0" stroke-width="1.150"/></svg>
<div style="left:15px;top:844px;width:13px;height:13px;background:#262626;"></div>
<svg style="left:16px;top:845px;" width="12" height="10" viewBox="0 0 12 10"><path d="M0.300 5C3 0.600 8.500 0.600 11.200 5 8.500 9.400 3 9.400 0.300 5z" fill="#d0d0d0"/><circle cx="5.800" cy="5" r="2.300" fill="#262626"/><circle cx="5.800" cy="5" r="1" fill="#d0d0d0"/></svg>
<div style="left:45px;top:844px;width:13px;height:13px;background:#232323;"></div>
<div style="left:60px;top:844px;width:13px;height:13px;background:#232323;"></div>
<svg style="left:85px;top:846px;" width="6" height="9" viewBox="0 0 6 9"><path d="M0.800 0.500l3.600 3.800-3.600 3.800" fill="none" stroke="#a8a8a8" stroke-width="1.100"/></svg>
<div style="left:96px;top:844px;width:12px;height:12px;background:#6c7ee0;"></div>
<span id="t56" class="t" style="left:117px;top:842px;font-size:11.5px;line-height:16px;color:#d8d8d8;">32</span>
<svg style="left:146px;top:844px;" width="13" height="12" viewBox="0 0 13 12"><path d="M6.500 0.300l1.900 4 4.300 0.400-3.300 2.800 1 4.200-3.900-2.300-3.900 2.300 1-4.200L0.300 4.700l4.300-0.400z" fill="#d0d0d0"/></svg>
<span id="t57" class="t" style="left:166px;top:842px;font-size:11.5px;line-height:16px;color:#d0d0d0;">Shape Layer 1</span>
<div style="left:278px;top:844px;width:13px;height:13px;background:#232323;"></div>
<svg style="left:278px;top:844px;" width="13" height="12" viewBox="0 0 13 12"><path d="M2 6.500a4.500 4.500 0 0 1 9 0z" fill="none" stroke="#d0d0d0" stroke-width="1.200"/><path d="M6.500 1.500v9.500M0.500 7.500h12M4 11h5" stroke="#d0d0d0" stroke-width="1.100"/><path d="M2.500 7v2M10.500 7v2" stroke="#d0d0d0" stroke-width="1"/></svg>
<div style="left:293px;top:844px;width:13px;height:13px;background:#232323;"></div>
<svg style="left:294px;top:844px;" width="12" height="12" viewBox="0 0 12 12"><circle cx="6" cy="6" r="2" fill="none" stroke="#8a8a8a"/><path d="M6 0.500v2.500M6 9v2.500M0.500 6H3M9 6h2.500M2 2l1.800 1.800M8.200 8.200L10 10M2 10l1.800-1.800M8.200 3.800L10 2" stroke="#8a8a8a" stroke-width="0.900"/></svg>
<div style="left:308px;top:844px;width:13px;height:13px;background:#232323;"></div>
<svg style="left:308.5px;top:844px;" width="12" height="12" viewBox="0 0 12 12"><path d="M1.500 11L10.500 1.500" stroke="#d0d0d0" stroke-width="1.300"/></svg>
<div style="left:353px;top:844px;width:13px;height:13px;background:#232323;"></div>
<div style="left:368px;top:844px;width:13px;height:13px;background:#232323;"></div>
<div style="left:383px;top:844px;width:13px;height:13px;background:#232323;"></div>
<svg style="left:415.5px;top:844px;" width="12" height="12" viewBox="0 0 12 12"><path d="M6.200 7.200a1.300 1.300 0 1 1 1.100-2 3 3 0 1 1-4.300-0.600 4.900 4.900 0 1 1 6.500 5.600" fill="none" stroke="#a8a8a8" stroke-width="1.050"/></svg>
<div style="left:434px;top:843px;width:89px;height:14px;background:#1e1e1e;"></div>
<span id="t58" class="t" style="left:441px;top:842px;font-size:11.5px;line-height:16px;color:#d8d8d8;">None</span>
<svg style="left:510.5px;top:847px;" width="8.5" height="6" viewBox="0 0 8.5 6"><path d="M0.500 0.800l3.75 3.8 3.75-3.800" fill="none" stroke="#c0c0c0" stroke-width="1.150"/></svg>
<div style="left:543px;top:604px;width:1px;height:388px;background:#111;"></div>
<div style="left:544px;top:604px;width:1048px;height:388px;background:#2a2a2a;"></div>
<div style="left:551px;top:655px;width:1024px;height:337px;background:#333333;"></div>
<div style="left:1575px;top:604px;width:17px;height:388px;background:#232323;"></div>
<div style="left:544px;top:604px;width:1031px;height:31px;background:#1f1f1f;border-radius:0 6px 0 0;"></div>
<div style="left:551px;top:606px;width:1018px;height:9px;background:#3b3731;border:1px solid #48423a;"></div>
<div style="left:551px;top:606px;width:837px;height:9px;background:#5e5e5e;"></div>
<div style="left:544px;top:606px;width:7px;height:9px;background:#2d8ceb;border-radius:5px 0 0 5px;"></div>
<div style="left:1387px;top:606px;width:7px;height:9px;background:#2d8ceb;border-radius:0 5px 5px 0;"></div>
<div style="left:1020px;top:607px;width:1px;height:7px;background:#2d8ceb;"></div>
<div style="left:544px;top:615px;width:1031px;height:20px;background:#1f1f1f;"></div>
<div style="left:544px;top:634px;width:1031px;height:1px;background:#0e0e0e;"></div>
<div style="left:551px;top:627px;width:1px;height:7px;background:#8a8a8a;"></div>
<span id="t59" class="t" style="left:541.3px;top:614px;font-size:11.5px;line-height:16px;color:#c0c0c0;clip-path:inset(0 0 0 2.500px);">0:00f</span>
<div style="left:621px;top:630px;width:1px;height:4px;background:#8a8a8a;"></div>
<span id="t60" class="t" style="left:612.3499999999999px;top:614px;font-size:11.5px;line-height:16px;color:#c0c0c0;">10f</span>
<div style="left:690px;top:630px;width:1px;height:4px;background:#8a8a8a;"></div>
<span id="t61" class="t" style="left:681.9px;top:614px;font-size:11.5px;line-height:16px;color:#c0c0c0;">20f</span>
<div style="left:760px;top:627px;width:1px;height:7px;background:#8a8a8a;"></div>
<span id="t62" class="t" style="left:743.9499999999999px;top:614px;font-size:11.5px;line-height:16px;color:#c0c0c0;">01:00f</span>
<div style="left:830px;top:630px;width:1px;height:4px;background:#8a8a8a;"></div>
<span id="t63" class="t" style="left:821.0px;top:614px;font-size:11.5px;line-height:16px;color:#c0c0c0;">10f</span>
<div style="left:899px;top:630px;width:1px;height:4px;background:#8a8a8a;"></div>
<span id="t64" class="t" style="left:890.55px;top:614px;font-size:11.5px;line-height:16px;color:#c0c0c0;">20f</span>
<div style="left:969px;top:627px;width:1px;height:7px;background:#8a8a8a;"></div>
<span id="t65" class="t" style="left:952.5999999999999px;top:614px;font-size:11.5px;line-height:16px;color:#c0c0c0;">02:00f</span>
<div style="left:1038px;top:630px;width:1px;height:4px;background:#8a8a8a;"></div>
<span id="t66" class="t" style="left:1029.6499999999999px;top:614px;font-size:11.5px;line-height:16px;color:#c0c0c0;">10f</span>
<div style="left:1108px;top:630px;width:1px;height:4px;background:#8a8a8a;"></div>
<span id="t67" class="t" style="left:1099.1999999999998px;top:614px;font-size:11.5px;line-height:16px;color:#c0c0c0;">20f</span>
<div style="left:1177px;top:627px;width:1px;height:7px;background:#8a8a8a;"></div>
<span id="t68" class="t" style="left:1161.25px;top:614px;font-size:11.5px;line-height:16px;color:#c0c0c0;">03:00f</span>
<div style="left:1247px;top:630px;width:1px;height:4px;background:#8a8a8a;"></div>
<span id="t69" class="t" style="left:1238.3px;top:614px;font-size:11.5px;line-height:16px;color:#c0c0c0;">10f</span>
<div style="left:1316px;top:630px;width:1px;height:4px;background:#8a8a8a;"></div>
<span id="t70" class="t" style="left:1307.85px;top:614px;font-size:11.5px;line-height:16px;color:#c0c0c0;">20f</span>
<div style="left:1386px;top:627px;width:1px;height:7px;background:#8a8a8a;"></div>
<span id="t71" class="t" style="left:1369.8999999999999px;top:614px;font-size:11.5px;line-height:16px;color:#c0c0c0;">04:00f</span>
<div style="left:1455px;top:630px;width:1px;height:4px;background:#8a8a8a;"></div>
<span id="t72" class="t" style="left:1446.9499999999998px;top:614px;font-size:11.5px;line-height:16px;color:#c0c0c0;">10f</span>
<div style="left:1525px;top:630px;width:1px;height:4px;background:#8a8a8a;"></div>
<span id="t73" class="t" style="left:1516.5px;top:614px;font-size:11.5px;line-height:16px;color:#c0c0c0;">20f</span>
<div style="left:551px;top:635px;width:1024px;height:15px;background:#626262;"></div>
<div style="left:544px;top:636px;width:7px;height:14px;background:#2d8ceb;border-radius:4px 0 0 4px;"></div>
<div style="left:551px;top:651px;width:1024px;height:3px;background:#1fc832;"></div>
<div style="left:551px;top:650px;width:1024px;height:1px;background:#1a1a1a;"></div>
<div style="left:551px;top:654px;width:1024px;height:1px;background:#1a1a1a;"></div>
<div style="left:551px;top:656px;width:1024px;height:16px;background:linear-gradient(180deg,#e2b7c6 0%,#dba9bb 50%,#cf9aae 100%);"></div>
<div style="left:551px;top:808px;width:1024px;height:16px;background:#71695a;"></div>
<div style="left:551px;top:825px;width:1024px;height:16px;background:#71695a;"></div>
<div style="left:551px;top:842px;width:1024px;height:16px;background:#515c8e;"></div>
<svg style="left:552px;top:809px;" width="6" height="6" viewBox="0 0 6 6"><path d="M0 6V2Q0 0 2 0H6" fill="none" stroke="#3a362e" stroke-width="1.500"/></svg>
<svg style="left:552px;top:826px;" width="6" height="6" viewBox="0 0 6 6"><path d="M0 6V2Q0 0 2 0H6" fill="none" stroke="#3a362e" stroke-width="1.500"/></svg>
<div style="left:544px;top:672px;width:1031px;height:1px;background:#232323;"></div>
<div style="left:544px;top:689px;width:1031px;height:1px;background:#232323;"></div>
<div style="left:544px;top:706px;width:1031px;height:1px;background:#232323;"></div>
<div style="left:544px;top:722px;width:1031px;height:1px;background:#232323;"></div>
<div style="left:544px;top:739px;width:1031px;height:1px;background:#232323;"></div>
<div style="left:544px;top:756px;width:1031px;height:1px;background:#232323;"></div>
<div style="left:544px;top:773px;width:1031px;height:1px;background:#232323;"></div>
<div style="left:544px;top:790px;width:1031px;height:1px;background:#232323;"></div>
<div style="left:544px;top:807px;width:1031px;height:1px;background:#232323;"></div>
<div style="left:544px;top:824px;width:1031px;height:1px;background:#232323;"></div>
<div style="left:544px;top:841px;width:1031px;height:1px;background:#232323;"></div>
<div style="left:544px;top:858px;width:1031px;height:1px;background:#232323;"></div>
<div style="left:1121px;top:628px;width:1px;height:364px;background:#3a8ce0;"></div>
<svg style="left:1115px;top:620px;" width="13" height="14" viewBox="0 0 13 14"><path d="M0.500 0.500h11.500v6l-5.700 6.500-5.800-6.500z" fill="#2d8ceb"/><path d="M6.300 5.500v7" stroke="#0a3a70" stroke-width="1"/></svg>
<svg style="left:1117px;top:675px;" width="9" height="11" viewBox="0 0 9 11"><path d="M1 0.500h7M1 9.500h7" stroke="#d0d0d0" stroke-width="1" fill="none"/><path d="M4.500 0.500v9" stroke="#c8d8e8" stroke-width="1.200" fill="none"/></svg>
<svg style="left:1117px;top:692px;" width="9" height="11" viewBox="0 0 9 11"><path d="M1 0.500h7M1 9.500h7" stroke="#d0d0d0" stroke-width="1" fill="none"/><path d="M4.500 0.500v9" stroke="#c8d8e8" stroke-width="1.200" fill="none"/></svg>
<svg style="left:1117px;top:709px;" width="9" height="11" viewBox="0 0 9 11"><path d="M1 0.500h7M1 9.500h7" stroke="#d0d0d0" stroke-width="1" fill="none"/><path d="M4.500 0.500v9" stroke="#c8d8e8" stroke-width="1.200" fill="none"/></svg>
<svg style="left:1117px;top:726px;" width="9" height="11" viewBox="0 0 9 11"><path d="M1 0.500h7M1 9.500h7" stroke="#d0d0d0" stroke-width="1" fill="none"/><path d="M4.500 0.500v9" stroke="#c8d8e8" stroke-width="1.200" fill="none"/></svg>
<svg style="left:1117px;top:743px;" width="9" height="11" viewBox="0 0 9 11"><path d="M1 0.500h7M1 9.500h7" stroke="#d0d0d0" stroke-width="1" fill="none"/><path d="M4.500 0.500v9" stroke="#c8d8e8" stroke-width="1.200" fill="none"/></svg>
<svg style="left:1117px;top:760px;" width="9" height="11" viewBox="0 0 9 11"><path d="M1 0.500h7M1 9.500h7" stroke="#d0d0d0" stroke-width="1" fill="none"/><path d="M4.500 0.500v9" stroke="#c8d8e8" stroke-width="1.200" fill="none"/></svg>
<svg style="left:1117px;top:777px;" width="9" height="11" viewBox="0 0 9 11"><path d="M1 0.500h7M1 9.500h7" stroke="#d0d0d0" stroke-width="1" fill="none"/><path d="M4.500 0.500v9" stroke="#c8d8e8" stroke-width="1.200" fill="none"/></svg>
<svg style="left:1117px;top:794px;" width="9" height="11" viewBox="0 0 9 11"><path d="M1 0.500h7M1 9.500h7" stroke="#d0d0d0" stroke-width="1" fill="none"/><path d="M4.500 0.500v9" stroke="#c8d8e8" stroke-width="1.200" fill="none"/></svg>
<svg style="left:1578px;top:636.5px;" width="12" height="16" viewBox="0 0 12 16"><path d="M0.500 0.500h11v9l-5.500 5.500-5.500-5.500z" fill="#b4b4b4"/></svg>
<svg style="left:1577px;top:656px;" width="14" height="14" viewBox="0 0 14 14"><path d="M6 1h9v8H9" fill="#b4b4b4"/><path d="M1 9l7-7v4h3v5z" fill="#b4b4b4" stroke="#232323" stroke-width="0.800"/><circle cx="6" cy="10" r="2.800" fill="#232323" stroke="#b4b4b4" stroke-width="1.200"/></svg>
<div style="left:11px;top:992px;width:533px;height:1px;background:#111;"></div>
<div style="left:11px;top:993px;width:533px;height:16px;background:#232323;"></div>
<div style="left:544px;top:992px;width:1031px;height:17px;background:#2a2a2a;"></div>
<div style="left:1575px;top:992px;width:17px;height:17px;background:#232323;"></div>
<div style="left:16px;top:994px;width:14px;height:14px;background:#161616;border-radius:2px;"></div>
<svg style="left:17px;top:995px;" width="70" height="13" viewBox="0 0 70 13"><g fill="none" stroke="#2d8ceb" stroke-width="1.200"><rect x="1" y="1" width="7" height="7"/><rect x="3.500" y="3.500" width="7" height="7" fill="#161616"/><rect x="5.500" y="5.500" width="3" height="3" fill="#2d8ceb" stroke="none"/></g><g fill="none" stroke="#b4b4b4" stroke-width="1.200"><circle cx="24" cy="5" r="3.800"/><rect x="25" y="5.500" width="5.500" height="5.500" fill="#232323"/></g><path d="M42 0.800h-1.200q-1.500 0-1.500 1.500v2.200q0 1.500-1.500 1.500 1.500 0 1.500 1.500v2.200q0 1.500 1.500 1.500H42M45 0.800h1.200q1.500 0 1.500 1.500v2.200q0 1.500 1.500 1.500-1.500 0-1.500 1.500v2.200q0 1.500-1.500 1.500H45" fill="none" stroke="#b4b4b4" stroke-width="1.700"/><path d="M58 10.500c0-5 1-7.500 4.500-7.500s4.500 3.500 4.500 7.500z" fill="#b4b4b4"/><path d="M66 3l1 -2M68.500 3.500l1.500-1.500M67 6h2.500" stroke="#b4b4b4" stroke-width="1"/></svg>
<span id="t74" class="t" style="left:116px;top:993px;font-size:11.5px;line-height:16px;color:#c6c6c6;">Frame Render Time:</span>
<span id="t75" class="t" style="left:222px;top:993px;font-size:11.5px;line-height:16px;color:#e0b050;">227ms</span>
<div style="left:275px;top:993px;width:134px;height:16px;background:transparent;border:1px solid #3a3a3a;border-radius:3px;"></div>
<span id="t76" class="t" style="left:281px;top:993px;font-size:11.5px;line-height:16px;color:#c6c6c6;">Toggle Switches / Modes</span>
<svg style="left:548px;top:996px;" width="100" height="11" viewBox="0 0 100 11"><path d="M1 7l4.500-4.500L10 7z" fill="#b4b4b4"/><path d="M30 5.500h32" stroke="#4a4a4a" stroke-width="1.200"/><circle cx="35.500" cy="5.500" r="3.500" fill="#232323" stroke="#c8c8c8" stroke-width="1.400"/><path d="M82 9l5.500-6 3 3.500 2.500-2.500 5.500 5z" fill="#c8c8c8"/></svg>
<div style="left:652px;top:994px;width:758px;height:14px;background:#353535;border-radius:7px;"></div>
<div style="left:1597px;top:134px;width:314px;height:5px;background:#161616;"></div>
<span id="t77" class="t" style="left:1610px;top:85px;font-size:11.5px;line-height:16px;color:#d2d2d2;">Preview</span>
<svg style="left:1662px;top:89.0px;" width="9" height="9" viewBox="0 0 9 9"><path d="M0 1.500h8.500M0 4.500h8.500M0 7.500h8.500" stroke="#d0d0d0" stroke-width="1.200"/></svg>
<svg style="left:1643px;top:115.5px;" width="112" height="11" viewBox="0 0 112 11"><g fill="#c8c8c8"><rect x="0.500" y="0.500" width="2" height="9.500"/><path d="M13 0.500v9.500L4 5.250z"/><path d="M33 0.500v9.500L24 5.250z"/><rect x="34.500" y="0.500" width="2" height="9.500"/><path d="M49.500 0.500v9.500l9.500-4.750z"/><rect x="72.500" y="0.500" width="2" height="9.500"/><path d="M76 0.500v9.500l9-4.750z"/><path d="M96.500 0.500v9.500l9-4.750z"/><rect x="107" y="0.500" width="2" height="9.500"/></g></svg>
<div style="left:1898px;top:139px;width:13px;height:871px;background:#262626;border-radius:0 0 8px 0;"></div>
<div style="left:1900px;top:141px;width:9px;height:538px;background:#363636;border-radius:5px;"></div>
<span id="t78" class="t" style="left:1610px;top:145px;font-size:11.5px;line-height:16px;color:#d2d2d2;">Properties: Camera 1</span>
<svg style="left:1879px;top:149.0px;" width="9" height="9" viewBox="0 0 9 9"><path d="M0 1.500h8.500M0 4.500h8.500M0 7.500h8.500" stroke="#d0d0d0" stroke-width="1.200"/></svg>
<span id="t79" class="t" style="left:1609px;top:169px;font-size:11.5px;line-height:16px;color:#b4b4b4;">Layer Transform</span>
<span id="t80" class="t" style="left:1750px;top:169px;font-size:11.5px;line-height:16px;color:#2d8ceb;">Reset</span>
<svg style="left:1619.5px;top:189px;" width="13" height="15" viewBox="0 0 13 15"><circle cx="6.500" cy="8.800" r="5" fill="none" stroke="#b4b4b4" stroke-width="1.200"/><path d="M4.500 1.500h4M6.500 1.500v2.300" stroke="#b4b4b4" stroke-width="1.200" fill="none"/></svg>
<span id="t81" class="t" style="left:1657px;top:189px;font-size:11.5px;line-height:16px;color:#b4b4b4;">Point of Interest</span>
<svg style="left:1619.5px;top:209px;" width="13" height="15" viewBox="0 0 13 15"><circle cx="6.500" cy="8.800" r="5" fill="none" stroke="#b4b4b4" stroke-width="1.200"/><path d="M4.500 1.500h4M6.500 1.500v2.300" stroke="#b4b4b4" stroke-width="1.200" fill="none"/></svg>
<span id="t82" class="t" style="left:1657px;top:209px;font-size:11.5px;line-height:16px;color:#b4b4b4;">Position</span>
<svg style="left:1619.5px;top:229px;" width="13" height="15" viewBox="0 0 13 15"><circle cx="6.500" cy="8.800" r="5" fill="none" stroke="#b4b4b4" stroke-width="1.200"/><path d="M4.500 1.500h4M6.500 1.500v2.300" stroke="#b4b4b4" stroke-width="1.200" fill="none"/></svg>
<span id="t83" class="t" style="left:1657px;top:229px;font-size:11.5px;line-height:16px;color:#b4b4b4;">Orientation</span>
<svg style="left:1619.5px;top:249px;" width="13" height="15" viewBox="0 0 13 15"><circle cx="6.500" cy="8.800" r="5" fill="none" stroke="#b4b4b4" stroke-width="1.200"/><path d="M4.500 1.500h4M6.500 1.500v2.300" stroke="#b4b4b4" stroke-width="1.200" fill="none"/></svg>
<span id="t84" class="t" style="left:1657px;top:249px;font-size:11.5px;line-height:16px;color:#b4b4b4;">X Rotation</span>
<svg style="left:1619.5px;top:269px;" width="13" height="15" viewBox="0 0 13 15"><circle cx="6.500" cy="8.800" r="5" fill="none" stroke="#b4b4b4" stroke-width="1.200"/><path d="M4.500 1.500h4M6.500 1.500v2.300" stroke="#b4b4b4" stroke-width="1.200" fill="none"/></svg>
<span id="t85" class="t" style="left:1657px;top:269px;font-size:11.5px;line-height:16px;color:#b4b4b4;">Y Rotation</span>
<svg style="left:1619.5px;top:289px;" width="13" height="15" viewBox="0 0 13 15"><circle cx="6.500" cy="8.800" r="5" fill="none" stroke="#b4b4b4" stroke-width="1.200"/><path d="M4.500 1.500h4M6.500 1.500v2.300" stroke="#b4b4b4" stroke-width="1.200" fill="none"/></svg>
<span id="t86" class="t" style="left:1657px;top:289px;font-size:11.5px;line-height:16px;color:#b4b4b4;">Z Rotation</span>
<span id="t87" class="t" style="left:1748.5px;top:188px;font-size:11.5px;line-height:16px;color:#2d8ceb;">965,7</span>
<div style="left:1748px;top:205px;width:39px;height:1px;background:#4a4a4a;"></div>
<span id="t88" class="t" style="left:1800px;top:188px;font-size:11.5px;line-height:16px;color:#2d8ceb;">550,6</span>
<div style="left:1798px;top:205px;width:39px;height:1px;background:#4a4a4a;"></div>
<span id="t89" class="t" style="left:1850px;top:188px;font-size:11.5px;line-height:16px;color:#2d8ceb;">-47,8</span>
<div style="left:1849px;top:205px;width:39px;height:1px;background:#4a4a4a;"></div>
<span id="t90" class="t" style="left:1748.5px;top:208px;font-size:11.5px;line-height:16px;color:#2d8ceb;">746,2</span>
<div style="left:1748px;top:225px;width:39px;height:1px;background:#4a4a4a;"></div>
<span id="t91" class="t" style="left:1800px;top:208px;font-size:11.5px;line-height:16px;color:#2d8ceb;">456,3</span>
<div style="left:1798px;top:225px;width:39px;height:1px;background:#4a4a4a;"></div>
<span id="t92" class="t" style="left:1850px;top:208px;font-size:11.5px;line-height:16px;color:#2d8ceb;">-2703,7</span>
<div style="left:1849px;top:225px;width:39px;height:1px;background:#4a4a4a;"></div>
<span id="t93" class="t" style="left:1748.5px;top:228px;font-size:11.5px;line-height:16px;color:#2d8ceb;">0 °</span>
<div style="left:1748px;top:245px;width:39px;height:1px;background:#4a4a4a;"></div>
<span id="t94" class="t" style="left:1800px;top:228px;font-size:11.5px;line-height:16px;color:#2d8ceb;">0 °</span>
<div style="left:1798px;top:245px;width:39px;height:1px;background:#4a4a4a;"></div>
<span id="t95" class="t" style="left:1850px;top:228px;font-size:11.5px;line-height:16px;color:#2d8ceb;">0 °</span>
<div style="left:1849px;top:245px;width:39px;height:1px;background:#4a4a4a;"></div>
<span id="t96" class="t" style="left:1748.5px;top:248px;font-size:11.5px;line-height:16px;color:#2d8ceb;">0 x+0°</span>
<div style="left:1748px;top:265px;width:38px;height:1px;background:#4a4a4a;"></div>
<span id="t97" class="t" style="left:1748.5px;top:268px;font-size:11.5px;line-height:16px;color:#2d8ceb;">0 x+0°</span>
<div style="left:1748px;top:285px;width:38px;height:1px;background:#4a4a4a;"></div>
<span id="t98" class="t" style="left:1748.5px;top:288px;font-size:11.5px;line-height:16px;color:#2d8ceb;">0 x+0°</span>
<div style="left:1748px;top:305px;width:38px;height:1px;background:#4a4a4a;"></div>
<div style="left:1597px;top:320px;width:301px;height:2px;background:#161616;"></div>
<span id="t99" class="t" style="left:1610px;top:330px;font-size:11.5px;line-height:16px;color:#d2d2d2;">Align</span>
<svg style="left:1879px;top:334.0px;" width="9" height="9" viewBox="0 0 9 9"><path d="M0 1.500h8.500M0 4.500h8.500M0 7.500h8.500" stroke="#d0d0d0" stroke-width="1.200"/></svg>
<span id="t100" class="t" style="left:1604px;top:356px;font-size:11.5px;line-height:16px;color:#b4b4b4;">Align Layers to:</span>
<div style="left:1690px;top:355px;width:111px;height:18px;background:#1b1b1b;border:1px solid #3a3a3a;border-radius:3px;"></div>
<span id="t101" class="t" style="left:1698px;top:356px;font-size:11.5px;line-height:16px;color:#d0d0d0;">Composition</span>
<svg style="left:1787.5px;top:361.5px;" width="8" height="6" viewBox="0 0 8 6"><path d="M0.500 0.800l3.5 3.8 3.5-3.800" fill="none" stroke="#b4b4b4" stroke-width="1.150"/></svg>
<svg style="left:1608px;top:379px;" width="190" height="18" viewBox="0 0 190 18"><g fill="#c0c0c0"><rect x="0" y="0" width="1.300" height="18"/><rect x="3" y="3" width="7.500" height="5"/><rect x="3" y="10.500" width="13" height="5"/><rect x="41.500" y="0" width="1.300" height="18"/><rect x="38" y="3" width="8.500" height="5"/><rect x="35.500" y="10.500" width="13.500" height="5"/><rect x="84" y="0" width="1.300" height="18"/><rect x="75" y="3" width="7.500" height="5"/><rect x="69.500" y="10.500" width="13" height="5"/><rect x="102" y="0" width="18" height="1.300"/><rect x="105" y="3" width="5" height="13"/><rect x="112.500" y="3" width="5" height="7.500"/><rect x="136" y="8.500" width="18" height="1.300"/><rect x="139" y="2.500" width="5" height="13.500"/><rect x="146.500" y="5" width="5" height="8.500"/><rect x="170" y="16.500" width="18" height="1.300"/><rect x="173" y="1" width="5" height="14"/><rect x="180.500" y="7" width="5" height="8"/></g></svg>
<div style="left:1603px;top:401px;width:195px;height:1px;background:#3a3a3a;"></div>
<span id="t102" class="t" style="left:1604px;top:404px;font-size:11.5px;line-height:16px;color:#b4b4b4;">Distribute Layers:</span>
<svg style="left:1608px;top:422px;" width="190" height="18" viewBox="0 0 190 18"><g fill="#454545"><rect x="0" y="1" width="18" height="1"/><rect x="3" y="3.500" width="10" height="4"/><rect x="0" y="10" width="18" height="1"/><rect x="3" y="12.500" width="12" height="4"/><rect x="34" y="4.500" width="18" height="1"/><rect x="38" y="3" width="10" height="4"/><rect x="34" y="13" width="18" height="1"/><rect x="37" y="11.500" width="12" height="4"/><rect x="68" y="7.500" width="18" height="1"/><rect x="72" y="2.500" width="10" height="4"/><rect x="68" y="16.500" width="18" height="1"/><rect x="71" y="11.500" width="12" height="4"/><rect x="103" y="0" width="1" height="18"/><rect x="105.500" y="3" width="4" height="12"/><rect x="113" y="0" width="1" height="18"/><rect x="115.500" y="5" width="4" height="8"/><rect x="140.500" y="0" width="1" height="18"/><rect x="138.500" y="3" width="5" height="12"/><rect x="149.500" y="0" width="1" height="18"/><rect x="147.500" y="5" width="5" height="8"/><rect x="178.500" y="0" width="1" height="18"/><rect x="172" y="3" width="5" height="12"/><rect x="187.500" y="0" width="1" height="18"/><rect x="182" y="5" width="4" height="8"/></g></svg>
<div style="left:1597px;top:451px;width:301px;height:2px;background:#161616;"></div>
<span id="t103" class="t" style="left:1610px;top:459px;font-size:11.5px;line-height:16px;color:#b4b4b4;">Audio</span>
<div style="left:1597px;top:480px;width:301px;height:2px;background:#161616;"></div>
<span id="t104" class="t" style="left:1610px;top:489px;font-size:11.5px;line-height:16px;color:#d2d2d2;">Effects &amp; Presets</span>
<svg style="left:1879px;top:493.0px;" width="9" height="9" viewBox="0 0 9 9"><path d="M0 1.500h8.500M0 4.500h8.500M0 7.500h8.500" stroke="#d0d0d0" stroke-width="1.200"/></svg>
<div style="left:1602px;top:514px;width:291px;height:18px;background:#161616;border:1px solid #303030;border-radius:3px;"></div>
<svg style="left:1609px;top:516px;" width="18" height="14" viewBox="0 0 18 14"><circle cx="7" cy="5" r="3.800" fill="none" stroke="#2d8ceb" stroke-width="1.400"/><path d="M4.500 8L0.800 12" stroke="#2d8ceb" stroke-width="1.600"/><path d="M10.500 8.500h5.500l-2.700 3z" fill="#2d8ceb"/></svg>
<span id="t105" class="t" style="left:1631px;top:515px;font-size:11.5px;line-height:16px;color:#d0d0d0;">drop sha</span>
<svg style="left:1880px;top:519px;" width="9" height="9" viewBox="0 0 9 9"><path d="M1 1l7 7M8 1l-7 7" stroke="#d0d0d0" stroke-width="1.500"/></svg>
<div style="left:1597px;top:535px;width:301px;height:1px;background:#1e1e1e;"></div>
<div style="left:1597px;top:552px;width:301px;height:1px;background:#1e1e1e;"></div>
<div style="left:1597px;top:569px;width:301px;height:1px;background:#1e1e1e;"></div>
<div style="left:1597px;top:586px;width:301px;height:1px;background:#1e1e1e;"></div>
<div style="left:1597px;top:603px;width:301px;height:1px;background:#1e1e1e;"></div>
<svg style="left:1604px;top:541.5px;" width="7.5" height="6" viewBox="0 0 7.5 6"><path d="M0.500 0.800l3.25 3.8 3.25-3.800" fill="none" stroke="#b4b4b4" stroke-width="1.150"/></svg>
<span id="t106" class="t" style="left:1614px;top:536px;font-size:11.5px;line-height:16px;color:#b4b4b4;">* Animation Presets</span>
<svg style="left:1621px;top:558.5px;" width="7.5" height="6" viewBox="0 0 7.5 6"><path d="M0.500 0.800l3.25 3.8 3.25-3.800" fill="none" stroke="#b4b4b4" stroke-width="1.150"/></svg>
<svg style="left:1631px;top:555px;" width="15" height="12" viewBox="0 0 15 12"><path d="M0 1.500h5v1H0z" fill="#b4b4b4"/><rect x="0" y="3" width="14.500" height="8.500" fill="#b4b4b4"/></svg>
<span id="t107" class="t" style="left:1651px;top:554px;font-size:11.5px;line-height:16px;color:#b4b4b4;">Image - Creative</span>
<svg style="left:1649px;top:572.5px;" width="13" height="12" viewBox="0 0 13 12"><path d="M0 2h2.500V0.500h3V2h2V0.500h3V2H13v10H0z" fill="#b4b4b4"/><text x="6.500" y="10.500" font-size="8.500" font-style="italic" font-weight="bold" text-anchor="middle" fill="#232323" font-family="Liberation Sans">fx</text></svg>
<span id="t108" class="t" style="left:1668px;top:570px;font-size:11.5px;line-height:16px;color:#b4b4b4;">Stacked Drop Shadows</span>
<svg style="left:1604px;top:592.5px;" width="7.5" height="6" viewBox="0 0 7.5 6"><path d="M0.500 0.800l3.25 3.8 3.25-3.800" fill="none" stroke="#b4b4b4" stroke-width="1.150"/></svg>
<span id="t109" class="t" style="left:1614px;top:587px;font-size:11.5px;line-height:16px;color:#b4b4b4;">Perspective</span>
<div style="left:1597px;top:604px;width:301px;height:16px;background:#333333;"></div>
<svg style="left:1632px;top:606px;" width="13" height="12" viewBox="0 0 13 12"><path d="M0 2h2.500V0.500h3V2h2V0.500h3V2H13v10H0z" fill="#b4b4b4"/><text x="6.500" y="10.500" font-size="8" font-weight="bold" text-anchor="middle" fill="#232323" font-family="Liberation Sans">32</text></svg>
<svg style="left:1650px;top:606px;" width="13" height="12" viewBox="0 0 13 12"><path d="M0 2h2.500V0.500h3V2h2V0.500h3V2H13v10H0z" fill="#b4b4b4"/><path d="M2 5.500h4M2 8h3.500M7 4.500l4 2.500-4 2.500z" stroke="#232323" fill="#232323" stroke-width="1"/></svg>
<div style="left:1666px;top:605px;width:76px;height:14px;background:#a2a2a2;"></div>
<span id="t110" class="t" style="left:1669.5px;top:604px;font-size:11.5px;line-height:16px;color:#1c1c1c;">Drop Shadow</span>
<div style="left:1597px;top:620px;width:301px;height:2px;background:#111;"></div>
<div style="left:1896px;top:622px;width:2px;height:17px;background:#111;"></div>
<svg style="left:1878px;top:624px;" width="13" height="12" viewBox="0 0 13 12"><path d="M2 0h11v12H6V7H0z" fill="#b4b4b4"/><path d="M0 7h6v5z" fill="#6a6a6a"/></svg>
<div style="left:1597px;top:640px;width:301px;height:2px;background:#161616;"></div>
<span id="t111" class="t" style="left:1610px;top:649px;font-size:11.5px;line-height:16px;color:#d2d2d2;">Paragraph</span>
<svg style="left:1879px;top:653.0px;" width="9" height="9" viewBox="0 0 9 9"><path d="M0 1.500h8.500M0 4.500h8.500M0 7.500h8.500" stroke="#d0d0d0" stroke-width="1.200"/></svg>
<div style="left:1603px;top:675px;width:22px;height:22px;background:#161616;border:1px solid #303030;border-radius:3px;"></div>
<svg style="left:1606.5px;top:679px;" width="15" height="15" viewBox="0 0 15 15"><rect x="0" y="0.0" width="15" height="1" fill="#2d8ceb"/><rect x="0" y="3.3" width="10" height="1" fill="#2d8ceb"/><rect x="0" y="6.6" width="15" height="1" fill="#2d8ceb"/><rect x="0" y="9.899999999999999" width="10" height="1" fill="#2d8ceb"/><rect x="0" y="13.2" width="15" height="1" fill="#2d8ceb"/></svg>
<svg style="left:1631.5px;top:679px;" width="15" height="15" viewBox="0 0 15 15"><rect x="0.0" y="0.0" width="15" height="1" fill="#b4b4b4"/><rect x="2.5" y="3.3" width="10" height="1" fill="#b4b4b4"/><rect x="0.0" y="6.6" width="15" height="1" fill="#b4b4b4"/><rect x="2.5" y="9.899999999999999" width="10" height="1" fill="#b4b4b4"/><rect x="0.0" y="13.2" width="15" height="1" fill="#b4b4b4"/></svg>
<svg style="left:1656.5px;top:679px;" width="15" height="15" viewBox="0 0 15 15"><rect x="0" y="0.0" width="15" height="1" fill="#b4b4b4"/><rect x="5" y="3.3" width="10" height="1" fill="#b4b4b4"/><rect x="0" y="6.6" width="15" height="1" fill="#b4b4b4"/><rect x="5" y="9.899999999999999" width="10" height="1" fill="#b4b4b4"/><rect x="0" y="13.2" width="15" height="1" fill="#b4b4b4"/></svg>
<svg style="left:1686.5px;top:679px;" width="15" height="15" viewBox="0 0 15 15"><rect x="0" y="0.0" width="15" height="1" fill="#b4b4b4"/><rect x="0" y="3.3" width="15" height="1" fill="#b4b4b4"/><rect x="0" y="6.6" width="15" height="1" fill="#b4b4b4"/><rect x="0" y="9.899999999999999" width="15" height="1" fill="#b4b4b4"/><rect x="0" y="13.2" width="10" height="1" fill="#b4b4b4"/></svg>
<svg style="left:1711.5px;top:679px;" width="15" height="15" viewBox="0 0 15 15"><rect x="0.0" y="0.0" width="15" height="1" fill="#b4b4b4"/><rect x="0.0" y="3.3" width="15" height="1" fill="#b4b4b4"/><rect x="0.0" y="6.6" width="15" height="1" fill="#b4b4b4"/><rect x="0.0" y="9.899999999999999" width="15" height="1" fill="#b4b4b4"/><rect x="2.5" y="13.2" width="10" height="1" fill="#b4b4b4"/></svg>
<svg style="left:1736.5px;top:679px;" width="15" height="15" viewBox="0 0 15 15"><rect x="0" y="0.0" width="15" height="1" fill="#b4b4b4"/><rect x="0" y="3.3" width="15" height="1" fill="#b4b4b4"/><rect x="0" y="6.6" width="15" height="1" fill="#b4b4b4"/><rect x="0" y="9.899999999999999" width="15" height="1" fill="#b4b4b4"/><rect x="5" y="13.2" width="10" height="1" fill="#b4b4b4"/></svg>
<svg style="left:1766.5px;top:679px;" width="15" height="15" viewBox="0 0 15 15"><rect x="0" y="0.0" width="15" height="1" fill="#b4b4b4"/><rect x="0" y="3.3" width="15" height="1" fill="#b4b4b4"/><rect x="0" y="6.6" width="15" height="1" fill="#b4b4b4"/><rect x="0" y="9.899999999999999" width="15" height="1" fill="#b4b4b4"/><rect x="0" y="13.2" width="15" height="1" fill="#b4b4b4"/></svg>
<div style="left:1604px;top:703px;width:180px;height:1px;background:#3a3a3a;"></div>
<svg style="left:1604px;top:705px;" width="16" height="17" viewBox="0 0 16 17"><g stroke="#b4b4b4" stroke-width="1.100" fill="none"><path d="M0 8.500h5M3 6.500l2 2-2 2M7.500 1v15M9.500 2.500h6.500M9.500 5.500h5M9.500 8.500h6.500M9.500 11.500h5M9.500 14.500h6.500"/></g></svg>
<span id="t112" class="t" style="left:1625px;top:704px;font-size:12px;line-height:16px;color:#2d8ceb;">0</span>
<span id="t113" class="t" style="left:1635.5px;top:704px;font-size:11.5px;line-height:16px;color:#a0a0a0;">px</span>
<svg style="left:1675px;top:706px;" width="17" height="16" viewBox="0 0 17 16"><g stroke="#b4b4b4" stroke-width="1.100" fill="none"><path d="M0 4.500h5M3 2.500l2 2-2 2"/><rect x="7.500" y="1.500" width="8.500" height="5"/><path d="M7 9.500h9.500M7 12.500h7M7 15.500h9.500"/></g></svg>
<span id="t114" class="t" style="left:1698px;top:704px;font-size:12px;line-height:16px;color:#2d8ceb;">0</span>
<span id="t115" class="t" style="left:1708.5px;top:704px;font-size:11.5px;line-height:16px;color:#a0a0a0;">px</span>
<svg style="left:1741px;top:704px;" width="17" height="17" viewBox="0 0 17 17"><g stroke="#b4b4b4" stroke-width="1.100" fill="none"><path d="M0 2.500h5M3 0.500l2 2-2 2M8.500 3h6M6.500 6.500h10M6.500 9.500h8M6.500 12.500h10M6.500 15.500h8"/></g></svg>
<span id="t116" class="t" style="left:1763px;top:704px;font-size:12px;line-height:16px;color:#2d8ceb;">0</span>
<span id="t117" class="t" style="left:1773.5px;top:704px;font-size:11.5px;line-height:16px;color:#a0a0a0;">px</span>
<svg style="left:1604px;top:725px;" width="17" height="17" viewBox="0 0 17 17"><g stroke="#b4b4b4" stroke-width="1.100" fill="none"><path d="M0 2.500h6.500M0 5.500h5M0 8.500h6.500M0 11.500h5M0 14.500h6.500M8.500 1v15M16 8.500h-5M13 6.500l-2 2 2 2"/></g></svg>
<span id="t118" class="t" style="left:1625px;top:722px;font-size:12px;line-height:16px;color:#2d8ceb;">0</span>
<span id="t119" class="t" style="left:1635.5px;top:721px;font-size:11.5px;line-height:16px;color:#a0a0a0;">px</span>
<svg style="left:1675px;top:726px;" width="17" height="17" viewBox="0 0 17 17"><g stroke="#b4b4b4" stroke-width="1.100" fill="none"><path d="M7 1.500h9.500M7 4.500h7M7 7.500h9.500M0 12.500h5M3 10.500l2 2-2 2"/><rect x="7.500" y="10.500" width="8.500" height="5"/></g></svg>
<span id="t120" class="t" style="left:1698px;top:723px;font-size:12px;line-height:16px;color:#2d8ceb;">0</span>
<span id="t121" class="t" style="left:1708.5px;top:723px;font-size:11.5px;line-height:16px;color:#a0a0a0;">px</span>
<div style="left:1740px;top:725px;width:22px;height:22px;background:#161616;border:1px solid #303030;border-radius:3px;"></div>
<svg style="left:1743px;top:730px;" width="17" height="13" viewBox="0 0 17 13"><path d="M0 1.500v9l5-4.500z" fill="#2d8ceb"/><path d="M11.500 0.500H16v12h-1.500V2H13v10.500h-1.500V7a3.300 3.300 0 0 1 0-6.500z" fill="#2d8ceb"/></svg>
<svg style="left:1766px;top:730px;" width="17" height="13" viewBox="0 0 17 13"><path d="M16.500 1.500v9l-5-4.500z" fill="#b4b4b4"/><path d="M4.500 0.500H9v12H7.500V2H6v10.500H4.500V7a3.300 3.300 0 0 1 0-6.500z" fill="#b4b4b4"/></svg>
<div style="left:1597px;top:794px;width:301px;height:2px;background:#161616;"></div>
<span id="t122" class="t" style="left:1610px;top:802px;font-size:11.5px;line-height:16px;color:#d2d2d2;">Brushes</span>
<svg style="left:1879px;top:806.0px;" width="9" height="9" viewBox="0 0 9 9"><path d="M0 1.500h8.500M0 4.500h8.500M0 7.500h8.500" stroke="#d0d0d0" stroke-width="1.200"/></svg>
<div style="left:1608px;top:834px;width:267px;height:100px;background:#262626;"></div>
<div style="left:1608px;top:834px;width:32px;height:32px;background:#272727;border-right:1px solid #202020;border-bottom:1px solid #202020;"></div>
<span id="t123" class="t" style="left:1621.0px;top:852px;font-size:9.5px;line-height:13px;color:#5c5c5c;">1</span>
<div style="left:1640px;top:834px;width:32px;height:32px;background:#272727;border-right:1px solid #202020;border-bottom:1px solid #202020;"></div>
<span id="t124" class="t" style="left:1653.0px;top:852px;font-size:9.5px;line-height:13px;color:#5c5c5c;">3</span>
<div style="left:1672px;top:834px;width:32px;height:32px;background:#272727;border-right:1px solid #202020;border-bottom:1px solid #202020;"></div>
<span id="t125" class="t" style="left:1685.0px;top:852px;font-size:9.5px;line-height:13px;color:#5c5c5c;">5</span>
<div style="left:1704px;top:834px;width:32px;height:32px;background:#272727;border-right:1px solid #202020;border-bottom:1px solid #202020;"></div>
<span id="t126" class="t" style="left:1717.0px;top:852px;font-size:9.5px;line-height:13px;color:#5c5c5c;">9</span>
<div style="left:1736px;top:834px;width:32px;height:32px;background:#272727;border-right:1px solid #202020;border-bottom:1px solid #202020;"></div>
<span id="t127" class="t" style="left:1746.75px;top:852px;font-size:9.5px;line-height:13px;color:#5c5c5c;">13</span>
<div style="left:1768px;top:834px;width:32px;height:32px;background:#272727;border-right:1px solid #202020;border-bottom:1px solid #202020;"></div>
<span id="t128" class="t" style="left:1778.75px;top:852px;font-size:9.5px;line-height:13px;color:#5c5c5c;">19</span>
<div style="left:1800px;top:834px;width:32px;height:32px;background:#272727;border-right:1px solid #202020;border-bottom:1px solid #202020;"></div>
<span id="t129" class="t" style="left:1813.0px;top:852px;font-size:9.5px;line-height:13px;color:#5c5c5c;">5</span>
<div style="left:1832px;top:834px;width:32px;height:32px;background:#272727;border-right:1px solid #202020;border-bottom:1px solid #202020;"></div>
<span id="t130" class="t" style="left:1845.0px;top:852px;font-size:9.5px;line-height:13px;color:#5c5c5c;">9</span>
<div style="left:1608px;top:866px;width:32px;height:32px;background:#272727;border-right:1px solid #202020;border-bottom:1px solid #202020;"></div>
<span id="t131" class="t" style="left:1618.75px;top:884px;font-size:9.5px;line-height:13px;color:#5c5c5c;">13</span>
<div style="left:1640px;top:866px;width:32px;height:32px;background:#272727;border-right:1px solid #202020;border-bottom:1px solid #202020;"></div>
<span id="t132" class="t" style="left:1650.75px;top:884px;font-size:9.5px;line-height:13px;color:#5c5c5c;">17</span>
<div style="left:1672px;top:866px;width:32px;height:32px;background:#353535;border-right:1px solid #202020;border-bottom:1px solid #202020;"></div>
<span id="t133" class="t" style="left:1682.75px;top:884px;font-size:9.5px;line-height:13px;color:#5c5c5c;">21</span>
<div style="left:1704px;top:866px;width:32px;height:32px;background:#272727;border-right:1px solid #202020;border-bottom:1px solid #202020;"></div>
<span id="t134" class="t" style="left:1714.75px;top:884px;font-size:9.5px;line-height:13px;color:#5c5c5c;">27</span>
<div style="left:1736px;top:866px;width:32px;height:32px;background:#272727;border-right:1px solid #202020;border-bottom:1px solid #202020;"></div>
<span id="t135" class="t" style="left:1746.75px;top:884px;font-size:9.5px;line-height:13px;color:#5c5c5c;">35</span>
<div style="left:1768px;top:866px;width:32px;height:32px;background:#272727;border-right:1px solid #202020;border-bottom:1px solid #202020;"></div>
<span id="t136" class="t" style="left:1778.75px;top:884px;font-size:9.5px;line-height:13px;color:#5c5c5c;">45</span>
<div style="left:1800px;top:866px;width:32px;height:32px;background:#272727;border-right:1px solid #202020;border-bottom:1px solid #202020;"></div>
<span id="t137" class="t" style="left:1810.75px;top:884px;font-size:9.5px;line-height:13px;color:#5c5c5c;">65</span>
<div style="left:1832px;top:866px;width:32px;height:32px;background:#272727;border-right:1px solid #202020;border-bottom:1px solid #202020;"></div>
<span id="t138" class="t" style="left:1840.25px;top:884px;font-size:9.5px;line-height:13px;color:#5c5c5c;">100</span>
<div style="left:1608px;top:898px;width:32px;height:32px;background:#272727;border-right:1px solid #202020;border-bottom:1px solid #202020;"></div>
<span id="t139" class="t" style="left:1616.25px;top:916px;font-size:9.5px;line-height:13px;color:#5c5c5c;">200</span>
<div style="left:1640px;top:898px;width:32px;height:32px;background:#272727;border-right:1px solid #202020;border-bottom:1px solid #202020;"></div>
<span id="t140" class="t" style="left:1648.25px;top:916px;font-size:9.5px;line-height:13px;color:#5c5c5c;">300</span>
<div style="left:1672px;top:898px;width:32px;height:32px;background:#272727;border-right:1px solid #202020;border-bottom:1px solid #202020;"></div>
<span id="t141" class="t" style="left:1682.75px;top:916px;font-size:9.5px;line-height:13px;color:#5c5c5c;">11</span>
<div style="left:1704px;top:898px;width:32px;height:32px;background:#272727;border-right:1px solid #202020;border-bottom:1px solid #202020;"></div>
<span id="t142" class="t" style="left:1714.75px;top:916px;font-size:9.5px;line-height:13px;color:#5c5c5c;">11</span>
<div style="left:1736px;top:898px;width:32px;height:32px;background:#272727;border-right:1px solid #202020;border-bottom:1px solid #202020;"></div>
<span id="t143" class="t" style="left:1746.75px;top:916px;font-size:9.5px;line-height:13px;color:#5c5c5c;">11</span>
<div style="left:1768px;top:898px;width:32px;height:32px;background:#272727;border-right:1px solid #202020;border-bottom:1px solid #202020;"></div>
<span id="t144" class="t" style="left:1778.75px;top:916px;font-size:9.5px;line-height:13px;color:#5c5c5c;">45</span>
<div style="left:1800px;top:898px;width:32px;height:32px;background:#272727;border-right:1px solid #202020;border-bottom:1px solid #202020;"></div>
<span id="t145" class="t" style="left:1810.75px;top:916px;font-size:9.5px;line-height:13px;color:#5c5c5c;">45</span>
<div style="left:1832px;top:898px;width:32px;height:32px;background:#272727;border-right:1px solid #202020;border-bottom:1px solid #202020;"></div>
<span id="t146" class="t" style="left:1842.75px;top:916px;font-size:9.5px;line-height:13px;color:#5c5c5c;">45</span>
<div style="left:1608px;top:930px;width:32px;height:3px;background:#272727;border-right:1px solid #202020;"></div>
<div style="left:1640px;top:930px;width:32px;height:3px;background:#272727;border-right:1px solid #202020;"></div>
<div style="left:1672px;top:930px;width:32px;height:3px;background:#272727;border-right:1px solid #202020;"></div>
<div style="left:1608px;top:834px;width:267px;height:100px;background:transparent;border:1px solid #0e0e0e;border-right:none;"></div>
<div style="left:1622.9px;top:843.6999999999999px;width:1.2px;height:1.2px;border-radius:50%;background:#d0d0d0;"></div>
<div style="left:1654.5px;top:843.3px;width:2px;height:2px;border-radius:50%;background:#d0d0d0;"></div>
<div style="left:1684.8px;top:841.5999999999999px;width:5.4px;height:5.4px;border-radius:50%;background:#9a9a9a;"></div>
<div style="left:1714.8px;top:839.5999999999999px;width:9.4px;height:9.4px;border-radius:50%;background:#9a9a9a;"></div>
<div style="left:1745.0px;top:837.8px;width:13.0px;height:13.0px;border-radius:50%;background:#9a9a9a;"></div>
<div style="left:1777.0px;top:837.8px;width:13.0px;height:13.0px;border-radius:50%;background:#9a9a9a;"></div>
<div style="left:1813.3px;top:842.0999999999999px;width:4.4px;height:4.4px;border-radius:50%;background:radial-gradient(circle,#bcbcbc 0%,#8c8c8c 28%,rgba(100,100,100,0.400) 58%,rgba(60,60,60,0) 92%);"></div>
<div style="left:1844.0px;top:840.8px;width:7.0px;height:7.0px;border-radius:50%;background:radial-gradient(circle,#bcbcbc 0%,#8c8c8c 28%,rgba(100,100,100,0.400) 58%,rgba(60,60,60,0) 92%);"></div>
<div style="left:1618.3px;top:871.0999999999999px;width:10.4px;height:10.4px;border-radius:50%;background:radial-gradient(circle,#bcbcbc 0%,#8c8c8c 28%,rgba(100,100,100,0.400) 58%,rgba(60,60,60,0) 92%);"></div>
<div style="left:1650.3px;top:871.0999999999999px;width:10.4px;height:10.4px;border-radius:50%;background:radial-gradient(circle,#bcbcbc 0%,#8c8c8c 28%,rgba(100,100,100,0.400) 58%,rgba(60,60,60,0) 92%);"></div>
<div style="left:1682.3px;top:871.0999999999999px;width:10.4px;height:10.4px;border-radius:50%;background:radial-gradient(circle,#bcbcbc 0%,#8c8c8c 28%,rgba(100,100,100,0.400) 58%,rgba(60,60,60,0) 92%);"></div>
<div style="left:1714.3px;top:871.0999999999999px;width:10.4px;height:10.4px;border-radius:50%;background:radial-gradient(circle,#bcbcbc 0%,#8c8c8c 28%,rgba(100,100,100,0.400) 58%,rgba(60,60,60,0) 92%);"></div>
<div style="left:1746.3px;top:871.0999999999999px;width:10.4px;height:10.4px;border-radius:50%;background:radial-gradient(circle,#bcbcbc 0%,#8c8c8c 28%,rgba(100,100,100,0.400) 58%,rgba(60,60,60,0) 92%);"></div>
<div style="left:1778.3px;top:871.0999999999999px;width:10.4px;height:10.4px;border-radius:50%;background:radial-gradient(circle,#bcbcbc 0%,#8c8c8c 28%,rgba(100,100,100,0.400) 58%,rgba(60,60,60,0) 92%);"></div>
<div style="left:1810.3px;top:871.0999999999999px;width:10.4px;height:10.4px;border-radius:50%;background:radial-gradient(circle,#bcbcbc 0%,#8c8c8c 28%,rgba(100,100,100,0.400) 58%,rgba(60,60,60,0) 92%);"></div>
<div style="left:1842.3px;top:871.0999999999999px;width:10.4px;height:10.4px;border-radius:50%;background:radial-gradient(circle,#bcbcbc 0%,#8c8c8c 28%,rgba(100,100,100,0.400) 58%,rgba(60,60,60,0) 92%);"></div>
<div style="left:1618.3px;top:903.0999999999999px;width:10.4px;height:10.4px;border-radius:50%;background:radial-gradient(circle,#bcbcbc 0%,#8c8c8c 28%,rgba(100,100,100,0.400) 58%,rgba(60,60,60,0) 92%);"></div>
<div style="left:1650.3px;top:903.0999999999999px;width:10.4px;height:10.4px;border-radius:50%;background:radial-gradient(circle,#bcbcbc 0%,#8c8c8c 28%,rgba(100,100,100,0.400) 58%,rgba(60,60,60,0) 92%);"></div>
<div style="left:1683.0px;top:906.9px;width:9.0px;height:2.8px;border-radius:50%;background:radial-gradient(ellipse,#c8c8c8 0%,#8c8c8c 40%,rgba(80,80,80,0) 100%);transform:rotate(-20deg);"></div>
<div style="left:1715.5px;top:906.9px;width:8px;height:2.8px;border-radius:50%;background:radial-gradient(ellipse,#c8c8c8 0%,#8c8c8c 40%,rgba(80,80,80,0) 100%);transform:rotate(-45deg);"></div>
<div style="left:1750.3px;top:904.6999999999999px;width:2.4px;height:7.2px;border-radius:50%;background:radial-gradient(ellipse,#c8c8c8 0%,#8c8c8c 40%,rgba(80,80,80,0) 100%);transform:rotate(0deg);"></div>
<div style="left:1778.5px;top:906.6999999999999px;width:10px;height:3.2px;border-radius:50%;background:radial-gradient(ellipse,#c8c8c8 0%,#8c8c8c 40%,rgba(80,80,80,0) 100%);transform:rotate(-20deg);"></div>
<div style="left:1810.9px;top:906.8px;width:9.2px;height:3.0px;border-radius:50%;background:radial-gradient(ellipse,#c8c8c8 0%,#8c8c8c 40%,rgba(80,80,80,0) 100%);transform:rotate(-45deg);"></div>
<div style="left:1846.2px;top:903.9px;width:2.6px;height:8.8px;border-radius:50%;background:radial-gradient(ellipse,#c8c8c8 0%,#8c8c8c 40%,rgba(80,80,80,0) 100%);transform:rotate(0deg);"></div>
<span id="t147" class="t" style="right:237.5px;top:940px;font-size:11.5px;line-height:16px;color:#4c4c4c;">Diameter:</span>
<span id="t148" class="t" style="left:1688.5px;top:939px;font-size:11.5px;line-height:16px;color:#4c4c4c;">21 px</span>
<span id="t149" class="t" style="right:237.5px;top:960px;font-size:11.5px;line-height:16px;color:#4c4c4c;">Angle:</span>
<span id="t150" class="t" style="left:1688.5px;top:959px;font-size:11.5px;line-height:16px;color:#4c4c4c;">0 °</span>
<span id="t151" class="t" style="right:237.5px;top:979px;font-size:11.5px;line-height:16px;color:#4c4c4c;">Roundness:</span>
<span id="t152" class="t" style="left:1688.5px;top:978px;font-size:11.5px;line-height:16px;color:#4c4c4c;">100 %</span>
<div style="left:1597px;top:996px;width:301px;height:14px;overflow:hidden;"><span class="t" style="position:absolute;right:215.500px;top:2px;font-size:11.500px;line-height:16px;color:#4c4c4c;letter-spacing:-0.250px;">Hardness:</span><span class="t" style="position:absolute;left:91.500px;top:1px;font-size:11.500px;line-height:16px;color:#4c4c4c;letter-spacing:-0.500px;">0 %</span></div>
<div style="left:1731px;top:945px;width:67px;height:65px;background:#272727;border:1px solid #0e0e0e;border-bottom:none;"></div>
<div style="left:1756.5px;top:970.5px;width:16px;height:16px;border-radius:50%;background:radial-gradient(circle,#bcbcbc 0%,#8c8c8c 28%,rgba(100,100,100,0.400) 58%,rgba(60,60,60,0) 92%);"></div>
<div style="left:158px;top:52px;width:327px;height:718.5px;background:#f9f9f9;border-radius:0 0 5px 5px;box-shadow:0 2px 8px rgba(0,0,0,0.450);"></div>
<div style="left:166px;top:52px;width:311px;height:25px;background:#f0f0f0;"></div>
<div style="left:163px;top:49px;width:318px;height:31.5px;background:transparent;border:3px solid #b3e11f;"></div>
<span id="t153" class="t" style="left:196px;top:57px;font-size:12px;line-height:16px;color:#141414;">New</span>
<svg style="left:463px;top:59.7px;" width="7" height="10" viewBox="0 0 7 10"><path d="M1 0.800l4.300 4.200-4.300 4.200" fill="none" stroke="#2a2a2a" stroke-width="1.300"/></svg>
<span id="t154" class="t" style="left:196px;top:79px;font-size:12px;line-height:16px;color:#141414;">Camera Settings...</span>
<span id="t155" class="t" style="right:1461px;top:79px;font-size:12px;line-height:16px;color:#141414;">Ctrl+Shift+Y</span>
<span id="t156" class="t" style="left:196px;top:111px;font-size:12px;line-height:16px;color:#9b9b9b;">Open Layer</span>
<span id="t157" class="t" style="left:196px;top:133px;font-size:12px;line-height:16px;color:#9b9b9b;">Open Layer Source</span>
<span id="t158" class="t" style="right:1461px;top:133px;font-size:12px;line-height:16px;color:#9b9b9b;">Alt+Numpad Enter</span>
<span id="t159" class="t" style="left:196px;top:155px;font-size:12px;line-height:16px;color:#9b9b9b;">Reveal in Explorer</span>
<span id="t160" class="t" style="left:196px;top:185px;font-size:12px;line-height:16px;color:#9b9b9b;">Mask</span>
<svg style="left:463px;top:187.7px;" width="7" height="10" viewBox="0 0 7 10"><path d="M1 0.800l4.300 4.200-4.300 4.200" fill="none" stroke="#a8a8a8" stroke-width="1.300"/></svg>
<span id="t161" class="t" style="left:196px;top:207px;font-size:12px;line-height:16px;color:#9b9b9b;">Mask and Shape Path</span>
<svg style="left:463px;top:209.7px;" width="7" height="10" viewBox="0 0 7 10"><path d="M1 0.800l4.300 4.200-4.300 4.200" fill="none" stroke="#a8a8a8" stroke-width="1.300"/></svg>
<span id="t162" class="t" style="left:196px;top:229px;font-size:12px;line-height:16px;color:#9b9b9b;">Quality</span>
<svg style="left:463px;top:231.7px;" width="7" height="10" viewBox="0 0 7 10"><path d="M1 0.800l4.300 4.200-4.300 4.200" fill="none" stroke="#a8a8a8" stroke-width="1.300"/></svg>
<span id="t163" class="t" style="left:196px;top:251px;font-size:12px;line-height:16px;color:#141414;">Switches</span>
<svg style="left:463px;top:253.7px;" width="7" height="10" viewBox="0 0 7 10"><path d="M1 0.800l4.300 4.200-4.300 4.200" fill="none" stroke="#2a2a2a" stroke-width="1.300"/></svg>
<span id="t164" class="t" style="left:196px;top:273px;font-size:12px;line-height:16px;color:#141414;">Transform</span>
<svg style="left:463px;top:275.7px;" width="7" height="10" viewBox="0 0 7 10"><path d="M1 0.800l4.300 4.200-4.300 4.200" fill="none" stroke="#2a2a2a" stroke-width="1.300"/></svg>
<span id="t165" class="t" style="left:196px;top:295px;font-size:12px;line-height:16px;color:#141414;">Time</span>
<svg style="left:463px;top:297.7px;" width="7" height="10" viewBox="0 0 7 10"><path d="M1 0.800l4.300 4.200-4.300 4.200" fill="none" stroke="#2a2a2a" stroke-width="1.300"/></svg>
<span id="t166" class="t" style="left:196px;top:317px;font-size:12px;line-height:16px;color:#141414;">Frame Blending</span>
<svg style="left:463px;top:319.7px;" width="7" height="10" viewBox="0 0 7 10"><path d="M1 0.800l4.300 4.200-4.300 4.200" fill="none" stroke="#2a2a2a" stroke-width="1.300"/></svg>
<span id="t167" class="t" style="left:196px;top:339px;font-size:12px;line-height:16px;color:#141414;">3D Layer</span>
<span id="t168" class="t" style="left:196px;top:361px;font-size:12px;line-height:16px;color:#9b9b9b;">Guide Layer</span>
<span id="t169" class="t" style="left:196px;top:383px;font-size:12px;line-height:16px;color:#9b9b9b;">Environment Layer</span>
<span id="t170" class="t" style="left:196px;top:405px;font-size:12px;line-height:16px;color:#141414;">Markers</span>
<svg style="left:463px;top:407.7px;" width="7" height="10" viewBox="0 0 7 10"><path d="M1 0.800l4.300 4.200-4.300 4.200" fill="none" stroke="#2a2a2a" stroke-width="1.300"/></svg>
<span id="t171" class="t" style="left:196px;top:436px;font-size:12px;line-height:16px;color:#9b9b9b;">Preserve Transparency</span>
<span id="t172" class="t" style="left:196px;top:458px;font-size:12px;line-height:16px;color:#9b9b9b;">Blending Mode</span>
<svg style="left:463px;top:460.7px;" width="7" height="10" viewBox="0 0 7 10"><path d="M1 0.800l4.300 4.200-4.300 4.200" fill="none" stroke="#a8a8a8" stroke-width="1.300"/></svg>
<span id="t173" class="t" style="left:196px;top:480px;font-size:12px;line-height:16px;color:#9b9b9b;">Next Blending Mode</span>
<span id="t174" class="t" style="right:1461px;top:480px;font-size:12px;line-height:16px;color:#9b9b9b;">Shift+=</span>
<span id="t175" class="t" style="left:196px;top:502px;font-size:12px;line-height:16px;color:#9b9b9b;">Previous Blending Mode</span>
<span id="t176" class="t" style="right:1461px;top:502px;font-size:12px;line-height:16px;color:#9b9b9b;">Shift+-</span>
<span id="t177" class="t" style="left:196px;top:524px;font-size:12px;line-height:16px;color:#9b9b9b;">Track Matte</span>
<svg style="left:463px;top:526.7px;" width="7" height="10" viewBox="0 0 7 10"><path d="M1 0.800l4.300 4.200-4.300 4.200" fill="none" stroke="#a8a8a8" stroke-width="1.300"/></svg>
<span id="t178" class="t" style="left:196px;top:546px;font-size:12px;line-height:16px;color:#9b9b9b;">Layer Styles</span>
<svg style="left:463px;top:548.7px;" width="7" height="10" viewBox="0 0 7 10"><path d="M1 0.800l4.300 4.200-4.300 4.200" fill="none" stroke="#a8a8a8" stroke-width="1.300"/></svg>
<span id="t179" class="t" style="left:196px;top:577px;font-size:12px;line-height:16px;color:#141414;">Arrange</span>
<svg style="left:463px;top:579.7px;" width="7" height="10" viewBox="0 0 7 10"><path d="M1 0.800l4.300 4.200-4.300 4.200" fill="none" stroke="#2a2a2a" stroke-width="1.300"/></svg>
<span id="t180" class="t" style="left:196px;top:608px;font-size:12px;line-height:16px;color:#141414;">Reveal</span>
<svg style="left:463px;top:610.7px;" width="7" height="10" viewBox="0 0 7 10"><path d="M1 0.800l4.300 4.200-4.300 4.200" fill="none" stroke="#2a2a2a" stroke-width="1.300"/></svg>
<span id="t181" class="t" style="left:196px;top:630px;font-size:12px;line-height:16px;color:#141414;">Create</span>
<svg style="left:463px;top:632.7px;" width="7" height="10" viewBox="0 0 7 10"><path d="M1 0.800l4.300 4.200-4.300 4.200" fill="none" stroke="#2a2a2a" stroke-width="1.300"/></svg>
<span id="t182" class="t" style="left:196px;top:661px;font-size:12px;line-height:16px;color:#141414;">Camera</span>
<svg style="left:463px;top:663.7px;" width="7" height="10" viewBox="0 0 7 10"><path d="M1 0.800l4.300 4.200-4.300 4.200" fill="none" stroke="#2a2a2a" stroke-width="1.300"/></svg>
<span id="t183" class="t" style="left:196px;top:683px;font-size:12px;line-height:16px;color:#9b9b9b;">Light</span>
<svg style="left:463px;top:685.7px;" width="7" height="10" viewBox="0 0 7 10"><path d="M1 0.800l4.300 4.200-4.300 4.200" fill="none" stroke="#a8a8a8" stroke-width="1.300"/></svg>
<span id="t184" class="t" style="left:196px;top:705px;font-size:12px;line-height:16px;color:#9b9b9b;">Auto-trace...</span>
<span id="t185" class="t" style="left:196px;top:727px;font-size:12px;line-height:16px;color:#9b9b9b;">Pre-compose...</span>
<span id="t186" class="t" style="right:1461px;top:727px;font-size:12px;line-height:16px;color:#9b9b9b;">Ctrl+Shift+C</span>
<span id="t187" class="t" style="left:196px;top:749px;font-size:12px;line-height:16px;color:#9b9b9b;">Scene Edit Detection...</span>
<div style="left:167px;top:102px;width:309px;height:1px;background:#d4d4d4;"></div>
<div style="left:167px;top:177px;width:309px;height:1px;background:#d4d4d4;"></div>
<div style="left:167px;top:428px;width:309px;height:1px;background:#d4d4d4;"></div>
<div style="left:167px;top:569px;width:309px;height:1px;background:#d4d4d4;"></div>
<div style="left:167px;top:600px;width:309px;height:1px;background:#d4d4d4;"></div>
<div style="left:167px;top:653px;width:309px;height:1px;background:#d4d4d4;"></div>
<svg style="left:171px;top:342px;" width="10" height="9" viewBox="0 0 10 9"><path d="M0.800 4.800l2.800 2.800 5.200-6.200" fill="none" stroke="#222" stroke-width="1.200"/></svg>
<div style="left:480px;top:52px;width:326px;height:224.5px;background:#f9f9f9;border-radius:0 0 5px 5px;box-shadow:0 2px 8px rgba(0,0,0,0.450);"></div>
<div style="left:483px;top:142.5px;width:317px;height:21px;background:#efefef;border-radius:4px;"></div>
<div style="left:483px;top:141px;width:188.5px;height:26px;background:transparent;border:3px solid #b3e11f;"></div>
<div style="left:478px;top:49px;width:3px;height:31.5px;background:#b3e11f;"></div>
<span id="t188" class="t" style="left:517px;top:57px;font-size:12px;line-height:16px;color:#141414;">Text</span>
<span id="t189" class="t" style="right:1140px;top:57px;font-size:12px;line-height:16px;color:#141414;">Ctrl+Alt+Shift+T</span>
<span id="t190" class="t" style="left:517px;top:79px;font-size:12px;line-height:16px;color:#141414;">Solid...</span>
<span id="t191" class="t" style="right:1140px;top:79px;font-size:12px;line-height:16px;color:#141414;">Ctrl+Y</span>
<span id="t192" class="t" style="left:517px;top:101px;font-size:12px;line-height:16px;color:#141414;">Light...</span>
<span id="t193" class="t" style="right:1140px;top:101px;font-size:12px;line-height:16px;color:#141414;">Ctrl+Alt+Shift+L</span>
<span id="t194" class="t" style="left:517px;top:123px;font-size:12px;line-height:16px;color:#141414;">Camera...</span>
<span id="t195" class="t" style="right:1140px;top:123px;font-size:12px;line-height:16px;color:#141414;">Ctrl+Alt+Shift+C</span>
<span id="t196" class="t" style="left:517px;top:145px;font-size:12px;line-height:16px;color:#141414;">Null Object</span>
<span id="t197" class="t" style="right:1140px;top:145px;font-size:12px;line-height:16px;color:#141414;">Ctrl+Alt+Shift+Y</span>
<span id="t198" class="t" style="left:517px;top:167px;font-size:12px;line-height:16px;color:#141414;">Shape Layer</span>
<span id="t199" class="t" style="left:517px;top:189px;font-size:12px;line-height:16px;color:#141414;">Adjustment Layer</span>
<span id="t200" class="t" style="right:1140px;top:189px;font-size:12px;line-height:16px;color:#141414;">Ctrl+Alt+Y</span>
<span id="t201" class="t" style="left:517px;top:211px;font-size:12px;line-height:16px;color:#141414;">Content-Aware Fill Layer...</span>
<span id="t202" class="t" style="left:517px;top:233px;font-size:12px;line-height:16px;color:#141414;">Adobe Photoshop File...</span>
<span id="t203" class="t" style="left:517px;top:255px;font-size:12px;line-height:16px;color:#141414;">Maxon Cinema 4D File...</span>
</body></html>
